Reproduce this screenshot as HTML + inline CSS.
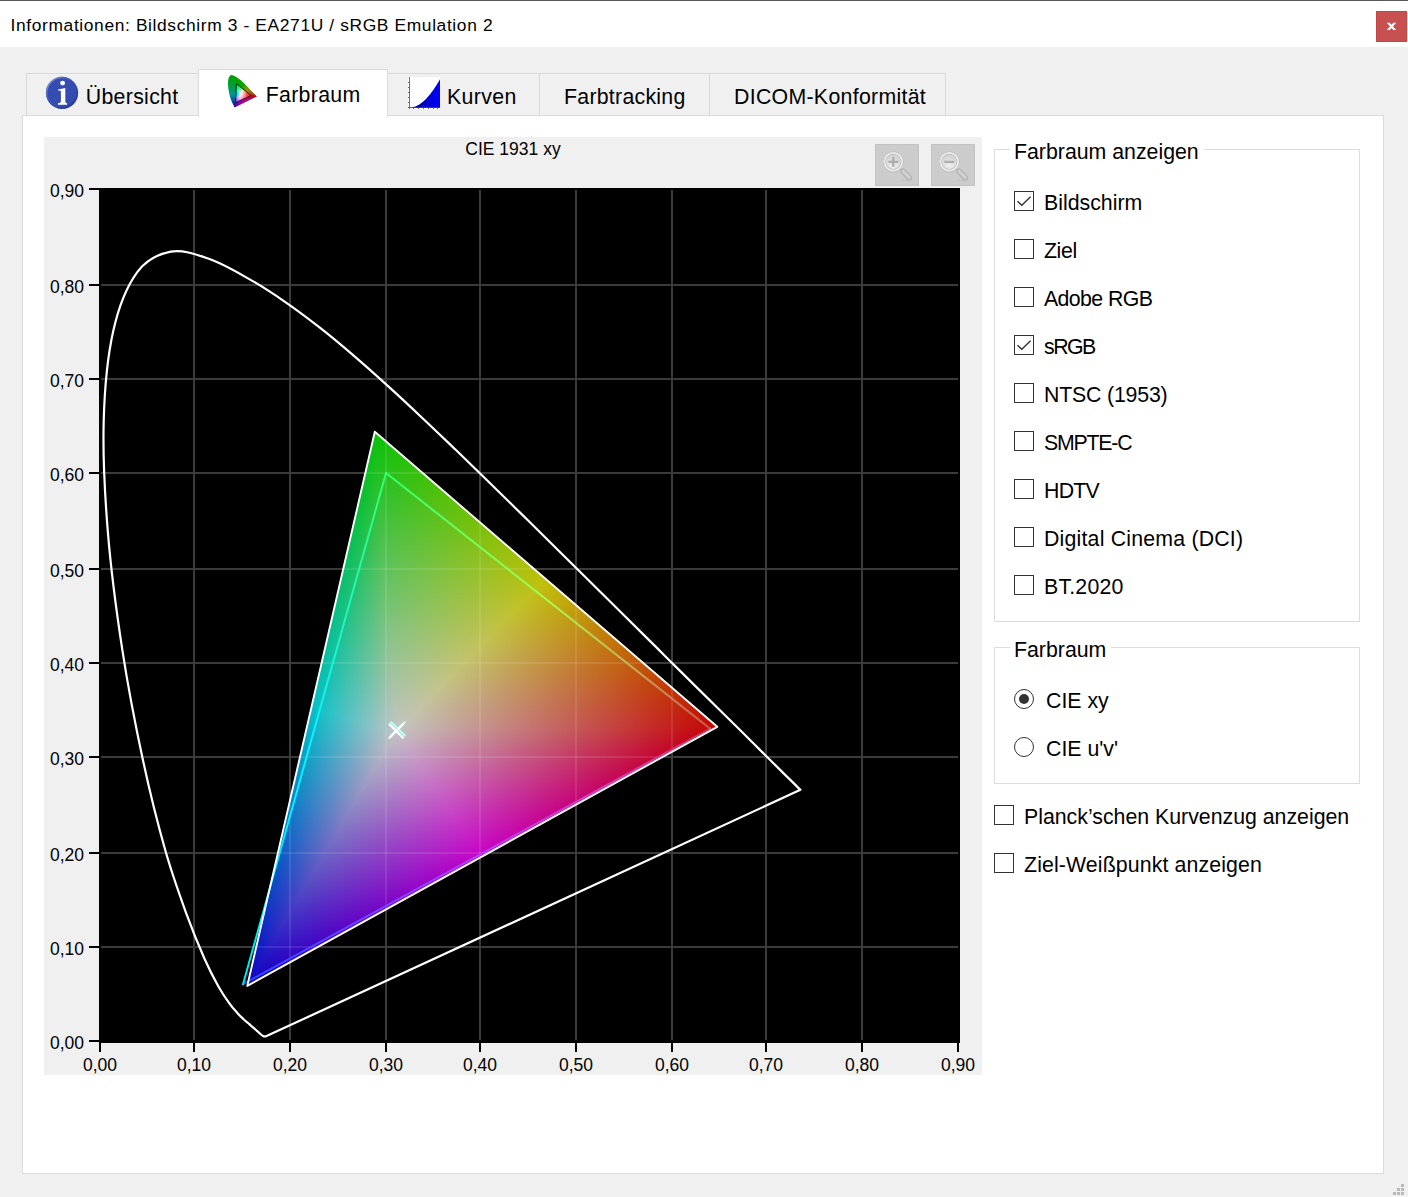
<!DOCTYPE html>
<html lang="de">
<head>
<meta charset="utf-8">
<title>Informationen: Bildschirm 3 - EA271U / sRGB Emulation 2</title>
<style>
html,body{margin:0;padding:0}
body{width:1408px;height:1197px;overflow:hidden;background:#f0f0f0;position:relative;font-family:"Liberation Sans",sans-serif;color:#000}
.abs{position:absolute}
#topline{left:0;top:0;width:1408px;height:1px;background:#5a5a5a}
#titlebar{left:0;top:1px;width:1408px;height:46px;background:#fff}
#title{left:10.6px;top:14px;font-size:17.4px;line-height:22px;white-space:nowrap;color:#000;letter-spacing:0.62px}
#close{left:1376px;top:11px;width:31px;height:31px;background:#c75050;box-sizing:border-box;border:1px solid #c64545}
#pane{left:22px;top:115px;width:1362px;height:1059px;background:#fff;box-sizing:border-box;border:1px solid #dadada}
.tab{box-sizing:border-box;border:1px solid #d9d9d9;border-bottom:none;background:#f0f0f0;top:73px;height:42px}
.tab.sel{background:#fff;top:69px;height:48px;border-color:#dcdcdc}
.tl{font-size:21.3px;line-height:26px;white-space:nowrap}
.gb{box-sizing:border-box;border:1px solid #dcdcdc;background:#fff}
.gl{font-size:21.3px;line-height:26px;white-space:nowrap;background:#fff;padding:0 5px 0 4px}
.cb{width:20px;height:20px;box-sizing:border-box;border:1px solid #333;background:#fff}
.rb{width:20px;height:20px;box-sizing:border-box;border:1px solid #333;border-radius:50%;background:#fff}
.lb{font-size:21.3px;line-height:26px;white-space:nowrap}
.zb{width:44px;height:42px;box-sizing:border-box;background:#cccccc;border:1px solid #c3c3c3}
</style>
</head>
<body>
<div class="abs" id="topline"></div>
<div class="abs" id="titlebar"></div>
<div class="abs" id="title">Informationen: Bildschirm 3 - EA271U / sRGB Emulation 2</div>
<div class="abs" id="close"><svg width="29" height="29" viewBox="0 0 29 29" style="display:block"><path d="M9.8 10.7H12.7L19.2 18.1H16.3Z" fill="#fff"/><path d="M19.2 10.7H16.3L9.8 18.1H12.7Z" fill="#fff"/></svg></div>

<div class="abs" id="pane"></div>

<!-- tabs -->
<div class="abs tab" style="left:26px;width:173px"></div>
<div class="abs tab" style="left:387px;width:153px"></div>
<div class="abs tab" style="left:539px;width:171px"></div>
<div class="abs tab" style="left:709px;width:237px"></div>
<div class="abs tab sel" style="left:198px;width:190px"></div>
<div class="abs tl" style="left:85.8px;top:84px;letter-spacing:0.3px">Übersicht</div>
<div class="abs tl" style="left:265.7px;top:82px;letter-spacing:0.32px">Farbraum</div>
<div class="abs tl" style="left:447px;top:84px;letter-spacing:0.38px">Kurven</div>
<div class="abs tl" style="left:564px;top:84px;letter-spacing:0.27px">Farbtracking</div>
<div class="abs tl" style="left:734px;top:84px;letter-spacing:0.3px">DICOM-Konformität</div>

<svg class="abs" style="left:0;top:60px" width="460" height="60" viewBox="0 60 460 60">
<defs>
<radialGradient id="ig" cx="0.42" cy="0.40" r="0.62"><stop offset="0" stop-color="#354db2"/><stop offset="0.86" stop-color="#344bb0"/><stop offset="1" stop-color="#2a3a98"/></radialGradient>
<linearGradient id="ihl" x1="0" y1="0" x2="1" y2="1"><stop offset="0" stop-color="#a5b1e2"/><stop offset="0.35" stop-color="#5568c0" stop-opacity="0.6"/><stop offset="0.6" stop-color="#344bb0" stop-opacity="0"/><stop offset="1" stop-color="#1c2a86"/></linearGradient>
<linearGradient id="kg" gradientUnits="userSpaceOnUse" x1="412" y1="0" x2="440" y2="0"><stop offset="0" stop-color="#00008c"/><stop offset="0.5" stop-color="#0000cc"/><stop offset="1" stop-color="#0000ff"/></linearGradient>
<clipPath id="hs"><path id="hsp" d="M231.4 75.1C229.3 75.1 228 78.8 228 83.5C228 91 230.5 100.5 234.6 107.2L256.6 96.4C250 90.5 240 77 231.4 75.1Z"/></clipPath>
<linearGradient id="h1" gradientUnits="userSpaceOnUse" x1="0" y1="75" x2="0" y2="107"><stop offset="0" stop-color="#00a000"/><stop offset="0.3" stop-color="#00a030"/><stop offset="0.6" stop-color="#009890"/><stop offset="0.85" stop-color="#0040a8"/><stop offset="1" stop-color="#2000b0"/></linearGradient>
<linearGradient id="h2" gradientUnits="userSpaceOnUse" x1="234" y1="78" x2="256" y2="96"><stop offset="0" stop-color="#00a000"/><stop offset="0.4" stop-color="#10a000"/><stop offset="0.62" stop-color="#909800"/><stop offset="0.8" stop-color="#b85000"/><stop offset="1" stop-color="#cc0000"/></linearGradient>
<linearGradient id="h3" gradientUnits="userSpaceOnUse" x1="234.6" y1="107" x2="256.6" y2="96.4"><stop offset="0" stop-color="#3800b0"/><stop offset="0.2" stop-color="#9000b0"/><stop offset="0.55" stop-color="#c00080"/><stop offset="0.8" stop-color="#c40030"/><stop offset="1" stop-color="#cc0000"/></linearGradient>
<clipPath id="it"><path d="M236.4 83.9L251.2 95.4L235.6 102.8Z"/></clipPath>
<radialGradient id="t1" gradientUnits="userSpaceOnUse" cx="236.6" cy="84.5" r="9"><stop offset="0" stop-color="#00ff50"/><stop offset="0.45" stop-color="#00ff70"/><stop offset="1" stop-color="#00ff70" stop-opacity="0"/></radialGradient>
<radialGradient id="t2" gradientUnits="userSpaceOnUse" cx="251" cy="95.4" r="10"><stop offset="0" stop-color="#ff1010"/><stop offset="0.4" stop-color="#ff4040"/><stop offset="1" stop-color="#ff6060" stop-opacity="0"/></radialGradient>
<radialGradient id="t3" gradientUnits="userSpaceOnUse" cx="235.4" cy="103" r="8.5"><stop offset="0" stop-color="#8030ff"/><stop offset="0.45" stop-color="#c060ff"/><stop offset="1" stop-color="#ff80ff" stop-opacity="0"/></radialGradient>
<radialGradient id="t4" gradientUnits="userSpaceOnUse" cx="235" cy="94" r="5.5"><stop offset="0" stop-color="#00f0ff"/><stop offset="0.5" stop-color="#00f0ff"/><stop offset="1" stop-color="#00f0ff" stop-opacity="0"/></radialGradient>
<radialGradient id="t5" gradientUnits="userSpaceOnUse" cx="244.5" cy="89" r="4.5"><stop offset="0" stop-color="#ffff60"/><stop offset="1" stop-color="#ffff80" stop-opacity="0"/></radialGradient>
<radialGradient id="t6" gradientUnits="userSpaceOnUse" cx="243.5" cy="99.5" r="5"><stop offset="0" stop-color="#ff50c0"/><stop offset="1" stop-color="#ff80e0" stop-opacity="0"/></radialGradient>
</defs>
<!-- info icon -->
<circle cx="62" cy="92.8" r="16.1" fill="url(#ig)"/>
<circle cx="62" cy="92.8" r="15.3" fill="none" stroke="url(#ihl)" stroke-width="1.7"/>
<circle cx="62.6" cy="83.1" r="2.45" fill="#fff"/>
<path d="M58 89.6L65.3 87.9L65.3 101.6Q65.3 103.1 67.1 103.3L67.1 104.8L58 104.8L58 103.3Q60.9 103.2 60.9 101.6L60.9 91.6Q60.9 90.2 58 90.6Z" fill="#fff"/>
<!-- gamut icon -->
<g clip-path="url(#hs)">
<rect x="226" y="72" width="34" height="38" fill="url(#h1)"/>
<path d="M231 72L260 92L258 98L251.2 95.4L236.4 83.9L233 78Z" fill="url(#h2)"/>
<path d="M260 96L251.2 95.4L235.6 102.8L233 110L260 100Z" fill="url(#h3)"/>
</g>
<g clip-path="url(#it)">
<rect x="234" y="82" width="20" height="23" fill="#fff"/>
<rect x="234" y="82" width="20" height="23" fill="url(#t4)"/>
<rect x="234" y="82" width="20" height="23" fill="url(#t5)"/>
<rect x="234" y="82" width="20" height="23" fill="url(#t6)"/>
<rect x="234" y="82" width="20" height="23" fill="url(#t1)"/>
<rect x="234" y="82" width="20" height="23" fill="url(#t2)"/>
<rect x="234" y="82" width="20" height="23" fill="url(#t3)"/>
</g>
<path d="M236.4 83.9L251.2 95.4L235.6 102.8Z" fill="none" stroke="#0a0a0a" stroke-width="1" stroke-opacity="0.9"/>
<!-- curves icon -->
<rect x="408" y="77" width="32" height="32" fill="#fff"/>
<g fill="#6e6e6e" shape-rendering="crispEdges"><rect x="409" y="77" width="1" height="32"/><rect x="408" y="107" width="32" height="1" fill="#6a6a50"/><rect x="408" y="82" width="1" height="1"/><rect x="408" y="87" width="1" height="1"/><rect x="408" y="92" width="1" height="1"/><rect x="408" y="97" width="1" height="1"/><rect x="408" y="102" width="1" height="1"/><rect x="408" y="107" width="1" height="1"/><rect x="409" y="108" width="1" height="1"/><rect x="413" y="108" width="1" height="1"/><rect x="418" y="108" width="1" height="1"/><rect x="423" y="108" width="1" height="1"/><rect x="428" y="108" width="1" height="1"/><rect x="433" y="108" width="1" height="1"/><rect x="437" y="108" width="1" height="1"/></g>
<path d="M410.5 107.5L410.50 107.50L411.48 107.45L412.47 107.31L413.45 107.10L414.43 106.82L415.42 106.47L416.40 106.06L417.38 105.58L418.37 105.05L419.35 104.45L420.33 103.79L421.32 103.08L422.30 102.30L423.28 101.48L424.27 100.59L425.25 99.65L426.23 98.65L427.22 97.60L428.20 96.50L429.18 95.34L430.17 94.13L431.15 92.87L432.13 91.56L433.12 90.19L434.10 88.77L435.08 87.30L436.07 85.78L437.05 84.21L438.03 82.59L439.02 80.92L440.00 79.20L440 107.5Z" fill="url(#kg)"/>

</svg>


<svg id="chart" width="1408" height="1197" viewBox="0 0 1408 1197" style="position:absolute;left:0;top:0">
<defs>
<clipPath id="tc"><path d="M374.8 431.8L717.3 726.8L247.3 985.9Z"/></clipPath>
<linearGradient id="r0" gradientUnits="userSpaceOnUse" x1="374.75" x2="375.03" y1="0" y2="0"><stop offset="-0.0143" stop-color="#08c008"/><stop offset="0.2014" stop-color="#08c008"/><stop offset="0.9921" stop-color="#08c008"/></linearGradient><linearGradient id="r1" gradientUnits="userSpaceOnUse" x1="374.29" x2="377.35" y1="0" y2="0"><stop offset="-0.0012" stop-color="#08c00a"/><stop offset="0.2177" stop-color="#09c009"/><stop offset="0.9986" stop-color="#0bc008"/></linearGradient><linearGradient id="r2" gradientUnits="userSpaceOnUse" x1="373.83" x2="379.68" y1="0" y2="0"><stop offset="-0.0006" stop-color="#08c00b"/><stop offset="0.2168" stop-color="#0bc00b"/><stop offset="1.0006" stop-color="#0dc008"/></linearGradient><linearGradient id="r3" gradientUnits="userSpaceOnUse" x1="373.37" x2="382.00" y1="0" y2="0"><stop offset="-0.0004" stop-color="#08c00c"/><stop offset="0.2176" stop-color="#0cc00c"/><stop offset="1.0002" stop-color="#10c008"/></linearGradient><linearGradient id="r4" gradientUnits="userSpaceOnUse" x1="372.91" x2="384.32" y1="0" y2="0"><stop offset="-0.0003" stop-color="#08c00e"/><stop offset="0.2171" stop-color="#0dc00d"/><stop offset="1.0000" stop-color="#12c008"/></linearGradient><linearGradient id="r5" gradientUnits="userSpaceOnUse" x1="372.45" x2="386.64" y1="0" y2="0"><stop offset="-0.0002" stop-color="#08c00f"/><stop offset="0.2169" stop-color="#0ec00e"/><stop offset="0.9998" stop-color="#15c008"/></linearGradient><linearGradient id="r6" gradientUnits="userSpaceOnUse" x1="371.99" x2="388.96" y1="0" y2="0"><stop offset="-0.0002" stop-color="#08c010"/><stop offset="0.2173" stop-color="#10c010"/><stop offset="0.9997" stop-color="#17c008"/></linearGradient><linearGradient id="r7" gradientUnits="userSpaceOnUse" x1="371.53" x2="391.29" y1="0" y2="0"><stop offset="-0.0001" stop-color="#08c012"/><stop offset="0.2170" stop-color="#11c011"/><stop offset="1.0002" stop-color="#1ac008"/></linearGradient><linearGradient id="r8" gradientUnits="userSpaceOnUse" x1="371.07" x2="393.61" y1="0" y2="0"><stop offset="-0.0001" stop-color="#08c013"/><stop offset="0.2169" stop-color="#12c012"/><stop offset="1.0001" stop-color="#1cc008"/></linearGradient><linearGradient id="r9" gradientUnits="userSpaceOnUse" x1="370.61" x2="395.93" y1="0" y2="0"><stop offset="-0.0001" stop-color="#07c015"/><stop offset="0.2171" stop-color="#13c013"/><stop offset="1.0000" stop-color="#1fc008"/></linearGradient><linearGradient id="r10" gradientUnits="userSpaceOnUse" x1="370.15" x2="398.25" y1="0" y2="0"><stop offset="-0.0001" stop-color="#07c016"/><stop offset="0.2170" stop-color="#15c015"/><stop offset="0.9999" stop-color="#21c008"/></linearGradient><linearGradient id="r11" gradientUnits="userSpaceOnUse" x1="369.69" x2="400.57" y1="0" y2="0"><stop offset="-0.0001" stop-color="#07c017"/><stop offset="0.2172" stop-color="#16c016"/><stop offset="0.9999" stop-color="#24c008"/></linearGradient><linearGradient id="r12" gradientUnits="userSpaceOnUse" x1="369.23" x2="402.90" y1="0" y2="0"><stop offset="-0.0000" stop-color="#07c019"/><stop offset="0.2171" stop-color="#17c017"/><stop offset="1.0001" stop-color="#26c008"/></linearGradient><linearGradient id="r13" gradientUnits="userSpaceOnUse" x1="368.77" x2="405.22" y1="0" y2="0"><stop offset="-0.0000" stop-color="#07c01a"/><stop offset="0.2170" stop-color="#18c018"/><stop offset="1.0000" stop-color="#29c008"/></linearGradient><linearGradient id="r14" gradientUnits="userSpaceOnUse" x1="368.31" x2="407.54" y1="0" y2="0"><stop offset="-0.0000" stop-color="#07c01c"/><stop offset="0.2172" stop-color="#1ac01a"/><stop offset="1.0000" stop-color="#2bc008"/></linearGradient><linearGradient id="r15" gradientUnits="userSpaceOnUse" x1="367.85" x2="409.86" y1="0" y2="0"><stop offset="-0.0000" stop-color="#07c01d"/><stop offset="0.2171" stop-color="#1bc01b"/><stop offset="0.9999" stop-color="#2ec008"/></linearGradient><linearGradient id="r16" gradientUnits="userSpaceOnUse" x1="367.39" x2="412.18" y1="0" y2="0"><stop offset="-0.0000" stop-color="#07c01e"/><stop offset="0.2170" stop-color="#1cc01c"/><stop offset="0.9999" stop-color="#30c008"/></linearGradient><linearGradient id="r17" gradientUnits="userSpaceOnUse" x1="366.93" x2="414.51" y1="0" y2="0"><stop offset="-0.0000" stop-color="#07c020"/><stop offset="0.2171" stop-color="#1dc01d"/><stop offset="1.0001" stop-color="#33c008"/></linearGradient><linearGradient id="r18" gradientUnits="userSpaceOnUse" x1="366.47" x2="416.83" y1="0" y2="0"><stop offset="-0.0000" stop-color="#07c021"/><stop offset="0.2170" stop-color="#1fc01f"/><stop offset="1.0000" stop-color="#35c008"/></linearGradient><linearGradient id="r19" gradientUnits="userSpaceOnUse" x1="366.01" x2="419.15" y1="0" y2="0"><stop offset="-0.0000" stop-color="#07c022"/><stop offset="0.2170" stop-color="#20c120"/><stop offset="1.0000" stop-color="#38c008"/></linearGradient><linearGradient id="r20" gradientUnits="userSpaceOnUse" x1="365.55" x2="421.47" y1="0" y2="0"><stop offset="0.0000" stop-color="#07c024"/><stop offset="0.2171" stop-color="#21c121"/><stop offset="0.9999" stop-color="#3ac008"/></linearGradient><linearGradient id="r21" gradientUnits="userSpaceOnUse" x1="365.09" x2="423.79" y1="0" y2="0"><stop offset="0.0000" stop-color="#07c025"/><stop offset="0.2170" stop-color="#23c123"/><stop offset="0.9999" stop-color="#3dc008"/></linearGradient><linearGradient id="r22" gradientUnits="userSpaceOnUse" x1="364.63" x2="426.12" y1="0" y2="0"><stop offset="0.0000" stop-color="#07c027"/><stop offset="0.2171" stop-color="#24c124"/><stop offset="1.0000" stop-color="#3fc008"/></linearGradient><linearGradient id="r23" gradientUnits="userSpaceOnUse" x1="364.17" x2="428.44" y1="0" y2="0"><stop offset="0.0000" stop-color="#07c028"/><stop offset="0.2171" stop-color="#25c125"/><stop offset="1.0000" stop-color="#42c008"/></linearGradient><linearGradient id="r24" gradientUnits="userSpaceOnUse" x1="363.71" x2="430.76" y1="0" y2="0"><stop offset="0.0000" stop-color="#07c029"/><stop offset="0.2170" stop-color="#26c126"/><stop offset="1.0000" stop-color="#44c008"/></linearGradient><linearGradient id="r25" gradientUnits="userSpaceOnUse" x1="363.25" x2="433.08" y1="0" y2="0"><stop offset="0.0000" stop-color="#07c02b"/><stop offset="0.2171" stop-color="#28c128"/><stop offset="1.0000" stop-color="#47c008"/></linearGradient><linearGradient id="r26" gradientUnits="userSpaceOnUse" x1="362.79" x2="435.41" y1="0" y2="0"><stop offset="0.0000" stop-color="#07c02c"/><stop offset="0.2170" stop-color="#29c129"/><stop offset="1.0001" stop-color="#49c008"/></linearGradient><linearGradient id="r27" gradientUnits="userSpaceOnUse" x1="362.33" x2="437.73" y1="0" y2="0"><stop offset="0.0000" stop-color="#06c02e"/><stop offset="0.2170" stop-color="#2ac12a"/><stop offset="1.0000" stop-color="#4cc008"/></linearGradient><linearGradient id="r28" gradientUnits="userSpaceOnUse" x1="361.87" x2="440.05" y1="0" y2="0"><stop offset="0.0000" stop-color="#06c02f"/><stop offset="0.2171" stop-color="#2bc12b"/><stop offset="1.0000" stop-color="#4ec008"/></linearGradient><linearGradient id="r29" gradientUnits="userSpaceOnUse" x1="361.41" x2="442.37" y1="0" y2="0"><stop offset="0.0000" stop-color="#06c030"/><stop offset="0.2170" stop-color="#2dc12d"/><stop offset="1.0000" stop-color="#51c008"/></linearGradient><linearGradient id="r30" gradientUnits="userSpaceOnUse" x1="360.95" x2="444.69" y1="0" y2="0"><stop offset="0.0000" stop-color="#06c032"/><stop offset="0.2171" stop-color="#2ec12e"/><stop offset="1.0000" stop-color="#53c008"/></linearGradient><linearGradient id="r31" gradientUnits="userSpaceOnUse" x1="360.49" x2="447.02" y1="0" y2="0"><stop offset="0.0000" stop-color="#06c033"/><stop offset="0.2171" stop-color="#2fc12f"/><stop offset="1.0001" stop-color="#56c008"/></linearGradient><linearGradient id="r32" gradientUnits="userSpaceOnUse" x1="360.03" x2="449.34" y1="0" y2="0"><stop offset="0.0000" stop-color="#06c034"/><stop offset="0.2170" stop-color="#30c130"/><stop offset="1.0000" stop-color="#58c008"/></linearGradient><linearGradient id="r33" gradientUnits="userSpaceOnUse" x1="359.57" x2="451.66" y1="0" y2="0"><stop offset="0.0000" stop-color="#06c036"/><stop offset="0.2171" stop-color="#32c132"/><stop offset="1.0000" stop-color="#5bc008"/></linearGradient><linearGradient id="r34" gradientUnits="userSpaceOnUse" x1="359.11" x2="453.98" y1="0" y2="0"><stop offset="0.0000" stop-color="#06c037"/><stop offset="0.2171" stop-color="#33c133"/><stop offset="1.0000" stop-color="#5dc008"/></linearGradient><linearGradient id="r35" gradientUnits="userSpaceOnUse" x1="358.65" x2="456.30" y1="0" y2="0"><stop offset="0.0000" stop-color="#06c039"/><stop offset="0.2170" stop-color="#34c134"/><stop offset="1.0000" stop-color="#60c008"/></linearGradient><linearGradient id="r36" gradientUnits="userSpaceOnUse" x1="358.19" x2="458.63" y1="0" y2="0"><stop offset="0.0000" stop-color="#06c03a"/><stop offset="0.2171" stop-color="#35c135"/><stop offset="1.0000" stop-color="#62c008"/></linearGradient><linearGradient id="r37" gradientUnits="userSpaceOnUse" x1="357.73" x2="460.95" y1="0" y2="0"><stop offset="0.0000" stop-color="#06c03b"/><stop offset="0.2170" stop-color="#37c137"/><stop offset="1.0000" stop-color="#65c008"/></linearGradient><linearGradient id="r38" gradientUnits="userSpaceOnUse" x1="357.27" x2="463.27" y1="0" y2="0"><stop offset="0.0000" stop-color="#06c03d"/><stop offset="0.2171" stop-color="#38c138"/><stop offset="1.0000" stop-color="#67c008"/></linearGradient><linearGradient id="r39" gradientUnits="userSpaceOnUse" x1="356.81" x2="465.59" y1="0" y2="0"><stop offset="0.0000" stop-color="#06c03e"/><stop offset="0.2171" stop-color="#39c139"/><stop offset="1.0000" stop-color="#6ac008"/></linearGradient><linearGradient id="r40" gradientUnits="userSpaceOnUse" x1="356.35" x2="467.91" y1="0" y2="0"><stop offset="0.0000" stop-color="#06c040"/><stop offset="0.2170" stop-color="#3ac13a"/><stop offset="1.0000" stop-color="#6cc008"/></linearGradient><linearGradient id="r41" gradientUnits="userSpaceOnUse" x1="355.89" x2="470.24" y1="0" y2="0"><stop offset="0.0000" stop-color="#06c041"/><stop offset="0.2171" stop-color="#3cc13c"/><stop offset="1.0000" stop-color="#6fc008"/></linearGradient><linearGradient id="r42" gradientUnits="userSpaceOnUse" x1="355.43" x2="472.56" y1="0" y2="0"><stop offset="0.0000" stop-color="#06c042"/><stop offset="0.2171" stop-color="#3dc13d"/><stop offset="1.0000" stop-color="#71c008"/></linearGradient><linearGradient id="r43" gradientUnits="userSpaceOnUse" x1="354.97" x2="474.88" y1="0" y2="0"><stop offset="0.0000" stop-color="#06c044"/><stop offset="0.2170" stop-color="#3ec13e"/><stop offset="1.0000" stop-color="#74c008"/></linearGradient><linearGradient id="r44" gradientUnits="userSpaceOnUse" x1="354.50" x2="477.20" y1="0" y2="0"><stop offset="-0.0000" stop-color="#05c045"/><stop offset="0.2171" stop-color="#3fc13f"/><stop offset="1.0000" stop-color="#76c008"/></linearGradient><linearGradient id="r45" gradientUnits="userSpaceOnUse" x1="354.04" x2="479.52" y1="0" y2="0"><stop offset="-0.0000" stop-color="#05c047"/><stop offset="0.2171" stop-color="#41c141"/><stop offset="1.0000" stop-color="#79c008"/></linearGradient><linearGradient id="r46" gradientUnits="userSpaceOnUse" x1="353.58" x2="481.85" y1="0" y2="0"><stop offset="-0.0000" stop-color="#05c048"/><stop offset="0.2171" stop-color="#42c142"/><stop offset="1.0000" stop-color="#7bc008"/></linearGradient><linearGradient id="r47" gradientUnits="userSpaceOnUse" x1="353.12" x2="484.17" y1="0" y2="0"><stop offset="-0.0000" stop-color="#05c049"/><stop offset="0.2171" stop-color="#43c143"/><stop offset="1.0000" stop-color="#7ec008"/></linearGradient><linearGradient id="r48" gradientUnits="userSpaceOnUse" x1="352.66" x2="486.49" y1="0" y2="0"><stop offset="-0.0000" stop-color="#05c04b"/><stop offset="0.2170" stop-color="#44c144"/><stop offset="1.0000" stop-color="#80c008"/></linearGradient><linearGradient id="r49" gradientUnits="userSpaceOnUse" x1="352.20" x2="488.81" y1="0" y2="0"><stop offset="-0.0000" stop-color="#05c04c"/><stop offset="0.2171" stop-color="#46c146"/><stop offset="1.0000" stop-color="#82c008"/></linearGradient><linearGradient id="r50" gradientUnits="userSpaceOnUse" x1="351.74" x2="491.13" y1="0" y2="0"><stop offset="-0.0000" stop-color="#05c04d"/><stop offset="0.2171" stop-color="#47c147"/><stop offset="1.0000" stop-color="#85c008"/></linearGradient><linearGradient id="r51" gradientUnits="userSpaceOnUse" x1="351.28" x2="493.46" y1="0" y2="0"><stop offset="-0.0000" stop-color="#05c04f"/><stop offset="0.2170" stop-color="#48c148"/><stop offset="1.0000" stop-color="#87c008"/></linearGradient><linearGradient id="r52" gradientUnits="userSpaceOnUse" x1="350.82" x2="495.78" y1="0" y2="0"><stop offset="-0.0000" stop-color="#05c050"/><stop offset="0.2171" stop-color="#49c149"/><stop offset="1.0000" stop-color="#8ac008"/></linearGradient><linearGradient id="r53" gradientUnits="userSpaceOnUse" x1="350.36" x2="498.10" y1="0" y2="0"><stop offset="-0.0000" stop-color="#05c052"/><stop offset="0.2171" stop-color="#4bc14b"/><stop offset="1.0000" stop-color="#8cc008"/></linearGradient><linearGradient id="r54" gradientUnits="userSpaceOnUse" x1="349.90" x2="500.42" y1="0" y2="0"><stop offset="-0.0000" stop-color="#05c053"/><stop offset="0.2171" stop-color="#4cc14c"/><stop offset="1.0000" stop-color="#8fc008"/></linearGradient><linearGradient id="r55" gradientUnits="userSpaceOnUse" x1="349.44" x2="502.74" y1="0" y2="0"><stop offset="-0.0000" stop-color="#05c054"/><stop offset="0.2171" stop-color="#4dc14d"/><stop offset="1.0000" stop-color="#91c008"/></linearGradient><linearGradient id="r56" gradientUnits="userSpaceOnUse" x1="348.98" x2="505.07" y1="0" y2="0"><stop offset="-0.0000" stop-color="#05c056"/><stop offset="0.2170" stop-color="#4ec14f"/><stop offset="1.0000" stop-color="#94c008"/></linearGradient><linearGradient id="r57" gradientUnits="userSpaceOnUse" x1="348.52" x2="507.39" y1="0" y2="0"><stop offset="-0.0000" stop-color="#05c057"/><stop offset="0.2171" stop-color="#50c250"/><stop offset="1.0000" stop-color="#96c008"/></linearGradient><linearGradient id="r58" gradientUnits="userSpaceOnUse" x1="348.06" x2="509.71" y1="0" y2="0"><stop offset="-0.0000" stop-color="#05c059"/><stop offset="0.2171" stop-color="#51c251"/><stop offset="1.0000" stop-color="#99c008"/></linearGradient><linearGradient id="r59" gradientUnits="userSpaceOnUse" x1="347.60" x2="512.03" y1="0" y2="0"><stop offset="-0.0000" stop-color="#05c05a"/><stop offset="0.2170" stop-color="#52c252"/><stop offset="1.0000" stop-color="#9bc008"/></linearGradient><linearGradient id="r60" gradientUnits="userSpaceOnUse" x1="347.14" x2="514.35" y1="0" y2="0"><stop offset="-0.0000" stop-color="#05c05b"/><stop offset="0.2171" stop-color="#54c254"/><stop offset="1.0000" stop-color="#9ec008"/></linearGradient><linearGradient id="r61" gradientUnits="userSpaceOnUse" x1="346.68" x2="516.68" y1="0" y2="0"><stop offset="-0.0000" stop-color="#04c05d"/><stop offset="0.2171" stop-color="#55c255"/><stop offset="1.0000" stop-color="#a0c008"/></linearGradient><linearGradient id="r62" gradientUnits="userSpaceOnUse" x1="346.22" x2="519.00" y1="0" y2="0"><stop offset="-0.0000" stop-color="#04c05e"/><stop offset="0.2170" stop-color="#56c256"/><stop offset="1.0000" stop-color="#a3c008"/></linearGradient><linearGradient id="r63" gradientUnits="userSpaceOnUse" x1="345.76" x2="521.32" y1="0" y2="0"><stop offset="-0.0000" stop-color="#04c05f"/><stop offset="0.2171" stop-color="#57c257"/><stop offset="1.0000" stop-color="#a5c008"/></linearGradient><linearGradient id="r64" gradientUnits="userSpaceOnUse" x1="345.30" x2="523.64" y1="0" y2="0"><stop offset="-0.0000" stop-color="#04c061"/><stop offset="0.2171" stop-color="#59c259"/><stop offset="1.0000" stop-color="#a8c008"/></linearGradient><linearGradient id="r65" gradientUnits="userSpaceOnUse" x1="344.84" x2="525.96" y1="0" y2="0"><stop offset="-0.0000" stop-color="#04c062"/><stop offset="0.2171" stop-color="#5ac25a"/><stop offset="1.0000" stop-color="#aac008"/></linearGradient><linearGradient id="r66" gradientUnits="userSpaceOnUse" x1="344.38" x2="528.29" y1="0" y2="0"><stop offset="-0.0000" stop-color="#04c064"/><stop offset="0.2171" stop-color="#5bc25b"/><stop offset="1.0000" stop-color="#adc008"/></linearGradient><linearGradient id="r67" gradientUnits="userSpaceOnUse" x1="343.92" x2="530.61" y1="0" y2="0"><stop offset="-0.0000" stop-color="#04c065"/><stop offset="0.2170" stop-color="#5cc25c"/><stop offset="1.0000" stop-color="#afc008"/></linearGradient><linearGradient id="r68" gradientUnits="userSpaceOnUse" x1="343.46" x2="532.93" y1="0" y2="0"><stop offset="0.0000" stop-color="#04c066"/><stop offset="0.2171" stop-color="#5ec25e"/><stop offset="1.0000" stop-color="#b2c008"/></linearGradient><linearGradient id="r69" gradientUnits="userSpaceOnUse" x1="343.00" x2="535.25" y1="0" y2="0"><stop offset="0.0000" stop-color="#04c068"/><stop offset="0.2171" stop-color="#5fc25f"/><stop offset="1.0000" stop-color="#b4c008"/></linearGradient><linearGradient id="r70" gradientUnits="userSpaceOnUse" x1="342.54" x2="537.57" y1="0" y2="0"><stop offset="0.0000" stop-color="#04c069"/><stop offset="0.2170" stop-color="#60c260"/><stop offset="1.0000" stop-color="#b7c008"/></linearGradient><linearGradient id="r71" gradientUnits="userSpaceOnUse" x1="342.08" x2="539.90" y1="0" y2="0"><stop offset="0.0000" stop-color="#04c06b"/><stop offset="0.2171" stop-color="#61c261"/><stop offset="1.0000" stop-color="#b9c008"/></linearGradient><linearGradient id="r72" gradientUnits="userSpaceOnUse" x1="341.62" x2="542.22" y1="0" y2="0"><stop offset="0.0000" stop-color="#04c06c"/><stop offset="0.2171" stop-color="#63c263"/><stop offset="1.0000" stop-color="#bcc008"/></linearGradient><linearGradient id="r73" gradientUnits="userSpaceOnUse" x1="341.16" x2="544.54" y1="0" y2="0"><stop offset="0.0000" stop-color="#04c06d"/><stop offset="0.2171" stop-color="#64c264"/><stop offset="1.0000" stop-color="#bec008"/></linearGradient><linearGradient id="r74" gradientUnits="userSpaceOnUse" x1="340.70" x2="546.86" y1="0" y2="0"><stop offset="0.0000" stop-color="#04c06f"/><stop offset="0.2171" stop-color="#65c265"/><stop offset="0.9927" stop-color="#c0c009"/><stop offset="1.0000" stop-color="#c0bf08"/></linearGradient><linearGradient id="r75" gradientUnits="userSpaceOnUse" x1="340.24" x2="549.18" y1="0" y2="0"><stop offset="0.0000" stop-color="#04c070"/><stop offset="0.2170" stop-color="#66c266"/><stop offset="0.9722" stop-color="#c0c00b"/><stop offset="1.0000" stop-color="#c0bd08"/></linearGradient><linearGradient id="r76" gradientUnits="userSpaceOnUse" x1="339.78" x2="551.51" y1="0" y2="0"><stop offset="0.0000" stop-color="#04c071"/><stop offset="0.2171" stop-color="#68c268"/><stop offset="0.9523" stop-color="#c0c00e"/><stop offset="1.0000" stop-color="#c0ba08"/></linearGradient><linearGradient id="r77" gradientUnits="userSpaceOnUse" x1="339.32" x2="553.83" y1="0" y2="0"><stop offset="0.0000" stop-color="#04c073"/><stop offset="0.2171" stop-color="#69c269"/><stop offset="0.9329" stop-color="#c0c010"/><stop offset="1.0000" stop-color="#c0b708"/></linearGradient><linearGradient id="r78" gradientUnits="userSpaceOnUse" x1="338.86" x2="556.15" y1="0" y2="0"><stop offset="0.0000" stop-color="#04c074"/><stop offset="0.2170" stop-color="#6ac26a"/><stop offset="0.9140" stop-color="#c0c013"/><stop offset="1.0000" stop-color="#c0b508"/></linearGradient><linearGradient id="r79" gradientUnits="userSpaceOnUse" x1="338.40" x2="558.47" y1="0" y2="0"><stop offset="0.0000" stop-color="#03c076"/><stop offset="0.2171" stop-color="#6bc26b"/><stop offset="0.8956" stop-color="#c0c015"/><stop offset="1.0000" stop-color="#c0b208"/></linearGradient><linearGradient id="r80" gradientUnits="userSpaceOnUse" x1="337.94" x2="560.79" y1="0" y2="0"><stop offset="0.0000" stop-color="#03c077"/><stop offset="0.2171" stop-color="#6dc26d"/><stop offset="0.8776" stop-color="#c0c018"/><stop offset="1.0000" stop-color="#c0b008"/></linearGradient><linearGradient id="r81" gradientUnits="userSpaceOnUse" x1="337.48" x2="563.12" y1="0" y2="0"><stop offset="0.0000" stop-color="#03c078"/><stop offset="0.2171" stop-color="#6ec26e"/><stop offset="0.8601" stop-color="#c0c01a"/><stop offset="1.0000" stop-color="#c0ad08"/></linearGradient><linearGradient id="r82" gradientUnits="userSpaceOnUse" x1="337.02" x2="565.44" y1="0" y2="0"><stop offset="0.0000" stop-color="#03c07a"/><stop offset="0.2171" stop-color="#6fc26f"/><stop offset="0.8429" stop-color="#c0c01d"/><stop offset="1.0000" stop-color="#c0ab08"/></linearGradient><linearGradient id="r83" gradientUnits="userSpaceOnUse" x1="336.56" x2="567.76" y1="0" y2="0"><stop offset="0.0000" stop-color="#03c07b"/><stop offset="0.2171" stop-color="#70c270"/><stop offset="0.8263" stop-color="#c0c01f"/><stop offset="1.0000" stop-color="#c1a807"/></linearGradient><linearGradient id="r84" gradientUnits="userSpaceOnUse" x1="336.10" x2="570.08" y1="0" y2="0"><stop offset="0.0000" stop-color="#03c07d"/><stop offset="0.2171" stop-color="#72c272"/><stop offset="0.8100" stop-color="#c1c122"/><stop offset="1.0000" stop-color="#c1a607"/></linearGradient><linearGradient id="r85" gradientUnits="userSpaceOnUse" x1="335.64" x2="572.41" y1="0" y2="0"><stop offset="0.0000" stop-color="#03c07e"/><stop offset="0.2171" stop-color="#73c273"/><stop offset="0.7940" stop-color="#c1c124"/><stop offset="1.0000" stop-color="#c1a307"/></linearGradient><linearGradient id="r86" gradientUnits="userSpaceOnUse" x1="335.18" x2="574.73" y1="0" y2="0"><stop offset="0.0000" stop-color="#03c07f"/><stop offset="0.2170" stop-color="#74c274"/><stop offset="0.7785" stop-color="#c1c127"/><stop offset="1.0000" stop-color="#c1a107"/></linearGradient><linearGradient id="r87" gradientUnits="userSpaceOnUse" x1="334.72" x2="577.05" y1="0" y2="0"><stop offset="0.0000" stop-color="#03c081"/><stop offset="0.2171" stop-color="#75c275"/><stop offset="0.7633" stop-color="#c1c129"/><stop offset="1.0000" stop-color="#c19e07"/></linearGradient><linearGradient id="r88" gradientUnits="userSpaceOnUse" x1="334.26" x2="579.37" y1="0" y2="0"><stop offset="0.0000" stop-color="#03c082"/><stop offset="0.2171" stop-color="#77c277"/><stop offset="0.7485" stop-color="#c1c12c"/><stop offset="1.0000" stop-color="#c19b07"/></linearGradient><linearGradient id="r89" gradientUnits="userSpaceOnUse" x1="333.80" x2="581.69" y1="0" y2="0"><stop offset="0.0000" stop-color="#03c083"/><stop offset="0.2171" stop-color="#78c278"/><stop offset="0.7339" stop-color="#c1c12e"/><stop offset="1.0000" stop-color="#c19907"/></linearGradient><linearGradient id="r90" gradientUnits="userSpaceOnUse" x1="333.34" x2="584.02" y1="0" y2="0"><stop offset="0.0000" stop-color="#03c085"/><stop offset="0.2171" stop-color="#79c279"/><stop offset="0.7198" stop-color="#c1c131"/><stop offset="1.0000" stop-color="#c19607"/></linearGradient><linearGradient id="r91" gradientUnits="userSpaceOnUse" x1="332.88" x2="586.34" y1="0" y2="0"><stop offset="0.0000" stop-color="#03c086"/><stop offset="0.2171" stop-color="#7ac27a"/><stop offset="0.7059" stop-color="#c1c133"/><stop offset="1.0000" stop-color="#c19407"/></linearGradient><linearGradient id="r92" gradientUnits="userSpaceOnUse" x1="332.42" x2="588.66" y1="0" y2="0"><stop offset="0.0000" stop-color="#03c088"/><stop offset="0.2171" stop-color="#7cc27c"/><stop offset="0.6923" stop-color="#c1c135"/><stop offset="1.0000" stop-color="#c19107"/></linearGradient><linearGradient id="r93" gradientUnits="userSpaceOnUse" x1="331.95" x2="590.98" y1="0" y2="0"><stop offset="-0.0000" stop-color="#03c089"/><stop offset="0.2171" stop-color="#7dc27d"/><stop offset="0.6791" stop-color="#c1c138"/><stop offset="1.0000" stop-color="#c18f07"/></linearGradient><linearGradient id="r94" gradientUnits="userSpaceOnUse" x1="331.49" x2="593.30" y1="0" y2="0"><stop offset="-0.0000" stop-color="#03c08a"/><stop offset="0.2170" stop-color="#7ec37e"/><stop offset="0.6660" stop-color="#c1c13a"/><stop offset="1.0000" stop-color="#c18c07"/></linearGradient><linearGradient id="r95" gradientUnits="userSpaceOnUse" x1="331.03" x2="595.63" y1="0" y2="0"><stop offset="-0.0000" stop-color="#03c08c"/><stop offset="0.2171" stop-color="#80c380"/><stop offset="0.6533" stop-color="#c1c13d"/><stop offset="1.0000" stop-color="#c18a07"/></linearGradient><linearGradient id="r96" gradientUnits="userSpaceOnUse" x1="330.57" x2="597.95" y1="0" y2="0"><stop offset="-0.0000" stop-color="#02c08d"/><stop offset="0.2171" stop-color="#81c381"/><stop offset="0.6408" stop-color="#c1c13f"/><stop offset="1.0000" stop-color="#c18707"/></linearGradient><linearGradient id="r97" gradientUnits="userSpaceOnUse" x1="330.11" x2="600.27" y1="0" y2="0"><stop offset="-0.0000" stop-color="#02c08f"/><stop offset="0.2170" stop-color="#82c382"/><stop offset="0.6287" stop-color="#c1c142"/><stop offset="1.0000" stop-color="#c18407"/></linearGradient><linearGradient id="r98" gradientUnits="userSpaceOnUse" x1="329.65" x2="602.59" y1="0" y2="0"><stop offset="-0.0000" stop-color="#02c090"/><stop offset="0.2171" stop-color="#83c383"/><stop offset="0.6167" stop-color="#c1c144"/><stop offset="1.0000" stop-color="#c18207"/></linearGradient><linearGradient id="r99" gradientUnits="userSpaceOnUse" x1="329.19" x2="604.91" y1="0" y2="0"><stop offset="-0.0000" stop-color="#02c091"/><stop offset="0.2171" stop-color="#85c385"/><stop offset="0.6050" stop-color="#c1c147"/><stop offset="1.0000" stop-color="#c17f07"/></linearGradient><linearGradient id="r100" gradientUnits="userSpaceOnUse" x1="328.73" x2="607.24" y1="0" y2="0"><stop offset="-0.0000" stop-color="#02c093"/><stop offset="0.2171" stop-color="#86c386"/><stop offset="0.5935" stop-color="#c1c149"/><stop offset="1.0000" stop-color="#c17d07"/></linearGradient><linearGradient id="r101" gradientUnits="userSpaceOnUse" x1="328.27" x2="609.56" y1="0" y2="0"><stop offset="-0.0000" stop-color="#02c094"/><stop offset="0.2171" stop-color="#87c387"/><stop offset="0.5822" stop-color="#c1c14c"/><stop offset="1.0000" stop-color="#c17a07"/></linearGradient><linearGradient id="r102" gradientUnits="userSpaceOnUse" x1="327.81" x2="611.88" y1="0" y2="0"><stop offset="-0.0000" stop-color="#02c096"/><stop offset="0.2171" stop-color="#88c388"/><stop offset="0.5712" stop-color="#c1c14e"/><stop offset="1.0000" stop-color="#c27806"/></linearGradient><linearGradient id="r103" gradientUnits="userSpaceOnUse" x1="327.35" x2="614.20" y1="0" y2="0"><stop offset="-0.0000" stop-color="#02c097"/><stop offset="0.2171" stop-color="#8ac38a"/><stop offset="0.5604" stop-color="#c2c251"/><stop offset="1.0000" stop-color="#c27506"/></linearGradient><linearGradient id="r104" gradientUnits="userSpaceOnUse" x1="326.89" x2="616.52" y1="0" y2="0"><stop offset="-0.0000" stop-color="#02c098"/><stop offset="0.2171" stop-color="#8bc38b"/><stop offset="0.5498" stop-color="#c2c253"/><stop offset="1.0000" stop-color="#c27306"/></linearGradient><linearGradient id="r105" gradientUnits="userSpaceOnUse" x1="326.43" x2="618.85" y1="0" y2="0"><stop offset="-0.0000" stop-color="#02c09a"/><stop offset="0.2170" stop-color="#8cc38c"/><stop offset="0.5394" stop-color="#c2c256"/><stop offset="1.0000" stop-color="#c27006"/></linearGradient><linearGradient id="r106" gradientUnits="userSpaceOnUse" x1="325.97" x2="621.17" y1="0" y2="0"><stop offset="-0.0000" stop-color="#02c09b"/><stop offset="0.2171" stop-color="#8dc38d"/><stop offset="0.5292" stop-color="#c2c258"/><stop offset="1.0000" stop-color="#c26e06"/></linearGradient><linearGradient id="r107" gradientUnits="userSpaceOnUse" x1="325.51" x2="623.49" y1="0" y2="0"><stop offset="-0.0000" stop-color="#02c09c"/><stop offset="0.2171" stop-color="#8fc38f"/><stop offset="0.5192" stop-color="#c2c25b"/><stop offset="1.0000" stop-color="#c26b06"/></linearGradient><linearGradient id="r108" gradientUnits="userSpaceOnUse" x1="325.05" x2="625.81" y1="0" y2="0"><stop offset="-0.0000" stop-color="#02c09e"/><stop offset="0.2171" stop-color="#90c390"/><stop offset="0.5093" stop-color="#c2c25d"/><stop offset="1.0000" stop-color="#c26806"/></linearGradient><linearGradient id="r109" gradientUnits="userSpaceOnUse" x1="324.59" x2="628.13" y1="0" y2="0"><stop offset="-0.0000" stop-color="#02c09f"/><stop offset="0.2171" stop-color="#91c391"/><stop offset="0.4997" stop-color="#c2c260"/><stop offset="1.0000" stop-color="#c26606"/></linearGradient><linearGradient id="r110" gradientUnits="userSpaceOnUse" x1="324.13" x2="630.46" y1="0" y2="0"><stop offset="-0.0000" stop-color="#02c0a1"/><stop offset="0.2171" stop-color="#92c392"/><stop offset="0.4902" stop-color="#c2c262"/><stop offset="1.0000" stop-color="#c26306"/></linearGradient><linearGradient id="r111" gradientUnits="userSpaceOnUse" x1="323.67" x2="632.78" y1="0" y2="0"><stop offset="-0.0000" stop-color="#02c0a2"/><stop offset="0.2171" stop-color="#94c394"/><stop offset="0.4809" stop-color="#c2c265"/><stop offset="1.0000" stop-color="#c26106"/></linearGradient><linearGradient id="r112" gradientUnits="userSpaceOnUse" x1="323.21" x2="635.10" y1="0" y2="0"><stop offset="-0.0000" stop-color="#02c0a3"/><stop offset="0.2171" stop-color="#95c395"/><stop offset="0.4717" stop-color="#c2c267"/><stop offset="1.0000" stop-color="#c25e06"/></linearGradient><linearGradient id="r113" gradientUnits="userSpaceOnUse" x1="322.75" x2="637.42" y1="0" y2="0"><stop offset="-0.0000" stop-color="#01c0a5"/><stop offset="0.2170" stop-color="#96c396"/><stop offset="0.4627" stop-color="#c2c26a"/><stop offset="1.0000" stop-color="#c25c06"/></linearGradient><linearGradient id="r114" gradientUnits="userSpaceOnUse" x1="322.29" x2="639.74" y1="0" y2="0"><stop offset="-0.0000" stop-color="#01c0a6"/><stop offset="0.2171" stop-color="#97c397"/><stop offset="0.4539" stop-color="#c2c26c"/><stop offset="1.0000" stop-color="#c25906"/></linearGradient><linearGradient id="r115" gradientUnits="userSpaceOnUse" x1="321.83" x2="642.07" y1="0" y2="0"><stop offset="-0.0000" stop-color="#01c0a8"/><stop offset="0.2171" stop-color="#99c399"/><stop offset="0.4452" stop-color="#c2c26e"/><stop offset="1.0000" stop-color="#c25706"/></linearGradient><linearGradient id="r116" gradientUnits="userSpaceOnUse" x1="321.37" x2="644.39" y1="0" y2="0"><stop offset="-0.0000" stop-color="#01c0a9"/><stop offset="0.2171" stop-color="#9ac39a"/><stop offset="0.4367" stop-color="#c2c271"/><stop offset="1.0000" stop-color="#c25406"/></linearGradient><linearGradient id="r117" gradientUnits="userSpaceOnUse" x1="320.91" x2="646.71" y1="0" y2="0"><stop offset="0.0000" stop-color="#01c0aa"/><stop offset="0.2171" stop-color="#9bc39b"/><stop offset="0.4283" stop-color="#c2c273"/><stop offset="1.0000" stop-color="#c25206"/></linearGradient><linearGradient id="r118" gradientUnits="userSpaceOnUse" x1="320.45" x2="649.03" y1="0" y2="0"><stop offset="0.0000" stop-color="#01c0ac"/><stop offset="0.2171" stop-color="#9cc39c"/><stop offset="0.4201" stop-color="#c2c276"/><stop offset="1.0000" stop-color="#c24f06"/></linearGradient><linearGradient id="r119" gradientUnits="userSpaceOnUse" x1="319.99" x2="651.35" y1="0" y2="0"><stop offset="0.0000" stop-color="#01c0ad"/><stop offset="0.2171" stop-color="#9ec39e"/><stop offset="0.4120" stop-color="#c2c278"/><stop offset="1.0000" stop-color="#c24c06"/></linearGradient><linearGradient id="r120" gradientUnits="userSpaceOnUse" x1="319.53" x2="653.68" y1="0" y2="0"><stop offset="0.0000" stop-color="#01c0ae"/><stop offset="0.2171" stop-color="#9fc39f"/><stop offset="0.4040" stop-color="#c2c27b"/><stop offset="1.0000" stop-color="#c34a05"/></linearGradient><linearGradient id="r121" gradientUnits="userSpaceOnUse" x1="319.07" x2="656.00" y1="0" y2="0"><stop offset="0.0000" stop-color="#01c0b0"/><stop offset="0.2171" stop-color="#a0c3a0"/><stop offset="0.3962" stop-color="#c2c27d"/><stop offset="1.0000" stop-color="#c34705"/></linearGradient><linearGradient id="r122" gradientUnits="userSpaceOnUse" x1="318.61" x2="658.32" y1="0" y2="0"><stop offset="0.0000" stop-color="#01c0b1"/><stop offset="0.2171" stop-color="#a1c3a1"/><stop offset="0.3885" stop-color="#c3c380"/><stop offset="1.0000" stop-color="#c34505"/></linearGradient><linearGradient id="r123" gradientUnits="userSpaceOnUse" x1="318.15" x2="660.64" y1="0" y2="0"><stop offset="0.0000" stop-color="#01c0b3"/><stop offset="0.2171" stop-color="#a3c3a3"/><stop offset="0.3809" stop-color="#c3c382"/><stop offset="1.0000" stop-color="#c34205"/></linearGradient><linearGradient id="r124" gradientUnits="userSpaceOnUse" x1="317.69" x2="662.96" y1="0" y2="0"><stop offset="0.0000" stop-color="#01c0b4"/><stop offset="0.2171" stop-color="#a4c3a4"/><stop offset="0.3735" stop-color="#c3c385"/><stop offset="1.0000" stop-color="#c34005"/></linearGradient><linearGradient id="r125" gradientUnits="userSpaceOnUse" x1="317.23" x2="665.29" y1="0" y2="0"><stop offset="0.0000" stop-color="#01c0b5"/><stop offset="0.2171" stop-color="#a5c3a5"/><stop offset="0.3662" stop-color="#c3c387"/><stop offset="1.0000" stop-color="#c33d05"/></linearGradient><linearGradient id="r126" gradientUnits="userSpaceOnUse" x1="316.77" x2="667.61" y1="0" y2="0"><stop offset="0.0000" stop-color="#01c0b7"/><stop offset="0.2171" stop-color="#a6c3a6"/><stop offset="0.3589" stop-color="#c3c38a"/><stop offset="1.0000" stop-color="#c33b05"/></linearGradient><linearGradient id="r127" gradientUnits="userSpaceOnUse" x1="316.31" x2="669.93" y1="0" y2="0"><stop offset="0.0000" stop-color="#01c0b8"/><stop offset="0.2171" stop-color="#a8c3a8"/><stop offset="0.3518" stop-color="#c3c38c"/><stop offset="1.0000" stop-color="#c33805"/></linearGradient><linearGradient id="r128" gradientUnits="userSpaceOnUse" x1="315.85" x2="672.25" y1="0" y2="0"><stop offset="0.0000" stop-color="#01c0ba"/><stop offset="0.2171" stop-color="#a9c3a9"/><stop offset="0.3448" stop-color="#c3c38f"/><stop offset="1.0000" stop-color="#c33505"/></linearGradient><linearGradient id="r129" gradientUnits="userSpaceOnUse" x1="315.39" x2="674.57" y1="0" y2="0"><stop offset="0.0000" stop-color="#01c0bb"/><stop offset="0.2171" stop-color="#aac3aa"/><stop offset="0.3379" stop-color="#c3c391"/><stop offset="1.0000" stop-color="#c33305"/></linearGradient><linearGradient id="r130" gradientUnits="userSpaceOnUse" x1="314.93" x2="676.90" y1="0" y2="0"><stop offset="0.0000" stop-color="#01c0bc"/><stop offset="0.2171" stop-color="#abc3ab"/><stop offset="0.3312" stop-color="#c3c394"/><stop offset="1.0000" stop-color="#c33005"/></linearGradient><linearGradient id="r131" gradientUnits="userSpaceOnUse" x1="314.47" x2="679.22" y1="0" y2="0"><stop offset="0.0000" stop-color="#00c0be"/><stop offset="0.2171" stop-color="#adc4ad"/><stop offset="0.3245" stop-color="#c3c396"/><stop offset="1.0000" stop-color="#c32e05"/></linearGradient><linearGradient id="r132" gradientUnits="userSpaceOnUse" x1="314.01" x2="681.54" y1="0" y2="0"><stop offset="0.0000" stop-color="#00c0bf"/><stop offset="0.2170" stop-color="#aec4ae"/><stop offset="0.3179" stop-color="#c3c399"/><stop offset="1.0000" stop-color="#c32b05"/></linearGradient><linearGradient id="r133" gradientUnits="userSpaceOnUse" x1="313.55" x2="683.86" y1="0" y2="0"><stop offset="0.0000" stop-color="#00c0c0"/><stop offset="0.2171" stop-color="#afc4af"/><stop offset="0.3114" stop-color="#c3c39b"/><stop offset="1.0000" stop-color="#c32905"/></linearGradient><linearGradient id="r134" gradientUnits="userSpaceOnUse" x1="313.09" x2="686.18" y1="0" y2="0"><stop offset="0.0000" stop-color="#00c0c2"/><stop offset="0.2171" stop-color="#b1c4b1"/><stop offset="0.3050" stop-color="#c3c39e"/><stop offset="1.0000" stop-color="#c32605"/></linearGradient><linearGradient id="r135" gradientUnits="userSpaceOnUse" x1="312.63" x2="688.51" y1="0" y2="0"><stop offset="0.0000" stop-color="#00c0c3"/><stop offset="0.2171" stop-color="#b2c4b2"/><stop offset="0.2988" stop-color="#c3c3a0"/><stop offset="1.0000" stop-color="#c32405"/></linearGradient><linearGradient id="r136" gradientUnits="userSpaceOnUse" x1="312.17" x2="690.83" y1="0" y2="0"><stop offset="0.0000" stop-color="#00c0c5"/><stop offset="0.2171" stop-color="#b3c4b3"/><stop offset="0.2926" stop-color="#c3c3a3"/><stop offset="1.0000" stop-color="#c32105"/></linearGradient><linearGradient id="r137" gradientUnits="userSpaceOnUse" x1="311.71" x2="693.15" y1="0" y2="0"><stop offset="0.0000" stop-color="#00c0c6"/><stop offset="0.2171" stop-color="#b4c4b4"/><stop offset="0.2865" stop-color="#c3c3a5"/><stop offset="1.0000" stop-color="#c31f05"/></linearGradient><linearGradient id="r138" gradientUnits="userSpaceOnUse" x1="311.25" x2="695.47" y1="0" y2="0"><stop offset="0.0000" stop-color="#00c0c7"/><stop offset="0.2171" stop-color="#b6c4b6"/><stop offset="0.2804" stop-color="#c3c3a7"/><stop offset="1.0000" stop-color="#c31c05"/></linearGradient><linearGradient id="r139" gradientUnits="userSpaceOnUse" x1="310.79" x2="697.79" y1="0" y2="0"><stop offset="0.0000" stop-color="#00bfc8"/><stop offset="0.0121" stop-color="#0ac0c8"/><stop offset="0.2171" stop-color="#b7c4b7"/><stop offset="0.2745" stop-color="#c3c3aa"/><stop offset="1.0000" stop-color="#c41904"/></linearGradient><linearGradient id="r140" gradientUnits="userSpaceOnUse" x1="310.33" x2="700.12" y1="0" y2="0"><stop offset="0.0000" stop-color="#00bec8"/><stop offset="0.0330" stop-color="#1cc1c7"/><stop offset="0.2171" stop-color="#b8c4b8"/><stop offset="0.2687" stop-color="#c3c3ac"/><stop offset="1.0000" stop-color="#c41704"/></linearGradient><linearGradient id="r141" gradientUnits="userSpaceOnUse" x1="309.86" x2="702.44" y1="0" y2="0"><stop offset="-0.0000" stop-color="#00bcc8"/><stop offset="0.0535" stop-color="#2ec1c7"/><stop offset="0.2171" stop-color="#b9c4b9"/><stop offset="0.2629" stop-color="#c4c4af"/><stop offset="1.0000" stop-color="#c41404"/></linearGradient><linearGradient id="r142" gradientUnits="userSpaceOnUse" x1="309.40" x2="704.76" y1="0" y2="0"><stop offset="-0.0000" stop-color="#00bbc8"/><stop offset="0.0738" stop-color="#3fc1c7"/><stop offset="0.2171" stop-color="#bbc4bb"/><stop offset="0.2572" stop-color="#c4c4b1"/><stop offset="1.0000" stop-color="#c41204"/></linearGradient><linearGradient id="r143" gradientUnits="userSpaceOnUse" x1="308.94" x2="707.08" y1="0" y2="0"><stop offset="-0.0000" stop-color="#00bac8"/><stop offset="0.0937" stop-color="#51c2c6"/><stop offset="0.2171" stop-color="#bcc4bc"/><stop offset="0.2516" stop-color="#c4c4b4"/><stop offset="1.0000" stop-color="#c40f04"/></linearGradient><linearGradient id="r144" gradientUnits="userSpaceOnUse" x1="308.48" x2="709.41" y1="0" y2="0"><stop offset="-0.0000" stop-color="#01b8c8"/><stop offset="0.1134" stop-color="#63c2c6"/><stop offset="0.2171" stop-color="#bdc4bd"/><stop offset="0.2461" stop-color="#c4c4b6"/><stop offset="1.0000" stop-color="#c40d04"/></linearGradient><linearGradient id="r145" gradientUnits="userSpaceOnUse" x1="308.02" x2="711.73" y1="0" y2="0"><stop offset="-0.0000" stop-color="#01b7c8"/><stop offset="0.1329" stop-color="#74c2c6"/><stop offset="0.2171" stop-color="#bec4be"/><stop offset="0.2407" stop-color="#c4c4b9"/><stop offset="1.0000" stop-color="#c40a04"/></linearGradient><linearGradient id="r146" gradientUnits="userSpaceOnUse" x1="307.56" x2="714.05" y1="0" y2="0"><stop offset="-0.0000" stop-color="#01b6c8"/><stop offset="0.1520" stop-color="#86c3c5"/><stop offset="0.2171" stop-color="#c0c4c0"/><stop offset="0.2353" stop-color="#c4c4bb"/><stop offset="1.0000" stop-color="#c40804"/></linearGradient><linearGradient id="r147" gradientUnits="userSpaceOnUse" x1="307.10" x2="716.37" y1="0" y2="0"><stop offset="-0.0000" stop-color="#01b4c8"/><stop offset="0.1709" stop-color="#98c3c5"/><stop offset="0.2171" stop-color="#c1c4c1"/><stop offset="0.2300" stop-color="#c4c4be"/><stop offset="1.0000" stop-color="#c40504"/></linearGradient><linearGradient id="r148" gradientUnits="userSpaceOnUse" x1="306.64" x2="715.12" y1="0" y2="0"><stop offset="-0.0000" stop-color="#01b3c8"/><stop offset="0.1912" stop-color="#a9c3c5"/><stop offset="0.2189" stop-color="#c2c4c2"/><stop offset="0.2267" stop-color="#c4c4c0"/><stop offset="0.7808" stop-color="#c43b3b"/><stop offset="1.0000" stop-color="#c40406"/></linearGradient><linearGradient id="r149" gradientUnits="userSpaceOnUse" x1="306.18" x2="711.50" y1="0" y2="0"><stop offset="-0.0000" stop-color="#01b1c8"/><stop offset="0.2128" stop-color="#bbc4c4"/><stop offset="0.2222" stop-color="#c3c4c3"/><stop offset="0.2248" stop-color="#c4c4c3"/><stop offset="0.4109" stop-color="#c49696"/><stop offset="1.0000" stop-color="#c40409"/></linearGradient><linearGradient id="r150" gradientUnits="userSpaceOnUse" x1="305.72" x2="707.87" y1="0" y2="0"><stop offset="-0.0000" stop-color="#01b0c8"/><stop offset="0.2238" stop-color="#c3c3c4"/><stop offset="0.2270" stop-color="#c4c2c4"/><stop offset="1.0000" stop-color="#c4040c"/></linearGradient><linearGradient id="r151" gradientUnits="userSpaceOnUse" x1="305.26" x2="704.24" y1="0" y2="0"><stop offset="-0.0000" stop-color="#01afc8"/><stop offset="0.2238" stop-color="#c2c2c4"/><stop offset="0.2333" stop-color="#c4bfc4"/><stop offset="1.0000" stop-color="#c4040f"/></linearGradient><linearGradient id="r152" gradientUnits="userSpaceOnUse" x1="304.80" x2="700.61" y1="0" y2="0"><stop offset="-0.0000" stop-color="#01adc8"/><stop offset="0.2238" stop-color="#c0c0c4"/><stop offset="0.2398" stop-color="#c4bcc4"/><stop offset="1.0000" stop-color="#c40412"/></linearGradient><linearGradient id="r153" gradientUnits="userSpaceOnUse" x1="304.34" x2="696.98" y1="0" y2="0"><stop offset="-0.0000" stop-color="#01acc8"/><stop offset="0.2238" stop-color="#bfbfc4"/><stop offset="0.2464" stop-color="#c4b9c4"/><stop offset="1.0000" stop-color="#c40415"/></linearGradient><linearGradient id="r154" gradientUnits="userSpaceOnUse" x1="303.88" x2="693.36" y1="0" y2="0"><stop offset="-0.0000" stop-color="#01aac8"/><stop offset="0.2238" stop-color="#bebdc4"/><stop offset="0.2531" stop-color="#c4b6c4"/><stop offset="1.0000" stop-color="#c40418"/></linearGradient><linearGradient id="r155" gradientUnits="userSpaceOnUse" x1="303.42" x2="689.73" y1="0" y2="0"><stop offset="-0.0000" stop-color="#01a9c8"/><stop offset="0.2238" stop-color="#bcbcc4"/><stop offset="0.2600" stop-color="#c4b3c4"/><stop offset="1.0000" stop-color="#c4041b"/></linearGradient><linearGradient id="r156" gradientUnits="userSpaceOnUse" x1="302.96" x2="686.10" y1="0" y2="0"><stop offset="-0.0000" stop-color="#02a8c7"/><stop offset="0.2238" stop-color="#bbbac4"/><stop offset="0.2669" stop-color="#c4b0c4"/><stop offset="1.0000" stop-color="#c5031e"/></linearGradient><linearGradient id="r157" gradientUnits="userSpaceOnUse" x1="302.50" x2="682.47" y1="0" y2="0"><stop offset="-0.0000" stop-color="#02a6c7"/><stop offset="0.2238" stop-color="#b9b8c4"/><stop offset="0.2739" stop-color="#c4adc4"/><stop offset="1.0000" stop-color="#c50321"/></linearGradient><linearGradient id="r158" gradientUnits="userSpaceOnUse" x1="302.04" x2="678.84" y1="0" y2="0"><stop offset="-0.0000" stop-color="#02a5c7"/><stop offset="0.2238" stop-color="#b8b7c4"/><stop offset="0.2811" stop-color="#c5a9c5"/><stop offset="1.0000" stop-color="#c50324"/></linearGradient><linearGradient id="r159" gradientUnits="userSpaceOnUse" x1="301.58" x2="675.22" y1="0" y2="0"><stop offset="-0.0000" stop-color="#02a3c7"/><stop offset="0.2238" stop-color="#b6b5c4"/><stop offset="0.2884" stop-color="#c5a6c5"/><stop offset="1.0000" stop-color="#c50327"/></linearGradient><linearGradient id="r160" gradientUnits="userSpaceOnUse" x1="301.12" x2="671.59" y1="0" y2="0"><stop offset="-0.0000" stop-color="#02a2c7"/><stop offset="0.2238" stop-color="#b5b4c4"/><stop offset="0.2958" stop-color="#c5a3c5"/><stop offset="1.0000" stop-color="#c5032a"/></linearGradient><linearGradient id="r161" gradientUnits="userSpaceOnUse" x1="300.66" x2="667.96" y1="0" y2="0"><stop offset="-0.0000" stop-color="#02a1c7"/><stop offset="0.2238" stop-color="#b3b2c4"/><stop offset="0.3033" stop-color="#c5a0c5"/><stop offset="1.0000" stop-color="#c5032d"/></linearGradient><linearGradient id="r162" gradientUnits="userSpaceOnUse" x1="300.20" x2="664.33" y1="0" y2="0"><stop offset="-0.0000" stop-color="#029fc7"/><stop offset="0.2238" stop-color="#b2b1c4"/><stop offset="0.3110" stop-color="#c59dc5"/><stop offset="1.0000" stop-color="#c50330"/></linearGradient><linearGradient id="r163" gradientUnits="userSpaceOnUse" x1="299.74" x2="660.70" y1="0" y2="0"><stop offset="-0.0000" stop-color="#029ec7"/><stop offset="0.2238" stop-color="#b1afc4"/><stop offset="0.3188" stop-color="#c59ac5"/><stop offset="1.0000" stop-color="#c50333"/></linearGradient><linearGradient id="r164" gradientUnits="userSpaceOnUse" x1="299.28" x2="657.08" y1="0" y2="0"><stop offset="-0.0000" stop-color="#029dc7"/><stop offset="0.2238" stop-color="#afaec4"/><stop offset="0.3268" stop-color="#c597c5"/><stop offset="1.0000" stop-color="#c50336"/></linearGradient><linearGradient id="r165" gradientUnits="userSpaceOnUse" x1="298.82" x2="653.45" y1="0" y2="0"><stop offset="-0.0000" stop-color="#029bc7"/><stop offset="0.2238" stop-color="#aeacc4"/><stop offset="0.3349" stop-color="#c594c5"/><stop offset="1.0000" stop-color="#c50339"/></linearGradient><linearGradient id="r166" gradientUnits="userSpaceOnUse" x1="298.36" x2="649.82" y1="0" y2="0"><stop offset="0.0000" stop-color="#029ac7"/><stop offset="0.2238" stop-color="#acabc4"/><stop offset="0.3431" stop-color="#c590c5"/><stop offset="1.0000" stop-color="#c5033c"/></linearGradient><linearGradient id="r167" gradientUnits="userSpaceOnUse" x1="297.90" x2="646.19" y1="0" y2="0"><stop offset="0.0000" stop-color="#0298c7"/><stop offset="0.2238" stop-color="#aba9c4"/><stop offset="0.3515" stop-color="#c58dc5"/><stop offset="1.0000" stop-color="#c5033f"/></linearGradient><linearGradient id="r168" gradientUnits="userSpaceOnUse" x1="297.44" x2="642.56" y1="0" y2="0"><stop offset="0.0000" stop-color="#0397c7"/><stop offset="0.2238" stop-color="#a9a8c4"/><stop offset="0.3600" stop-color="#c58ac5"/><stop offset="1.0000" stop-color="#c50342"/></linearGradient><linearGradient id="r169" gradientUnits="userSpaceOnUse" x1="296.98" x2="638.94" y1="0" y2="0"><stop offset="0.0000" stop-color="#0396c7"/><stop offset="0.2238" stop-color="#a8a6c4"/><stop offset="0.3687" stop-color="#c587c5"/><stop offset="1.0000" stop-color="#c50345"/></linearGradient><linearGradient id="r170" gradientUnits="userSpaceOnUse" x1="296.52" x2="635.31" y1="0" y2="0"><stop offset="0.0000" stop-color="#0394c7"/><stop offset="0.2238" stop-color="#a6a4c4"/><stop offset="0.3776" stop-color="#c584c5"/><stop offset="1.0000" stop-color="#c50348"/></linearGradient><linearGradient id="r171" gradientUnits="userSpaceOnUse" x1="296.06" x2="631.68" y1="0" y2="0"><stop offset="0.0000" stop-color="#0393c7"/><stop offset="0.2238" stop-color="#a5a3c4"/><stop offset="0.3866" stop-color="#c581c5"/><stop offset="1.0000" stop-color="#c5034b"/></linearGradient><linearGradient id="r172" gradientUnits="userSpaceOnUse" x1="295.60" x2="628.05" y1="0" y2="0"><stop offset="0.0000" stop-color="#0391c7"/><stop offset="0.2238" stop-color="#a4a1c4"/><stop offset="0.3958" stop-color="#c57ec5"/><stop offset="1.0000" stop-color="#c6024e"/></linearGradient><linearGradient id="r173" gradientUnits="userSpaceOnUse" x1="295.14" x2="624.42" y1="0" y2="0"><stop offset="0.0000" stop-color="#0390c7"/><stop offset="0.2238" stop-color="#a2a0c4"/><stop offset="0.4052" stop-color="#c57bc5"/><stop offset="1.0000" stop-color="#c60251"/></linearGradient><linearGradient id="r174" gradientUnits="userSpaceOnUse" x1="294.68" x2="620.80" y1="0" y2="0"><stop offset="0.0000" stop-color="#038fc7"/><stop offset="0.2238" stop-color="#a19ec4"/><stop offset="0.4147" stop-color="#c677c6"/><stop offset="1.0000" stop-color="#c60254"/></linearGradient><linearGradient id="r175" gradientUnits="userSpaceOnUse" x1="294.22" x2="617.17" y1="0" y2="0"><stop offset="0.0000" stop-color="#038dc7"/><stop offset="0.2238" stop-color="#9f9dc4"/><stop offset="0.4244" stop-color="#c674c6"/><stop offset="1.0000" stop-color="#c60258"/></linearGradient><linearGradient id="r176" gradientUnits="userSpaceOnUse" x1="293.76" x2="613.54" y1="0" y2="0"><stop offset="0.0000" stop-color="#038cc7"/><stop offset="0.2238" stop-color="#9e9bc4"/><stop offset="0.4344" stop-color="#c671c6"/><stop offset="1.0000" stop-color="#c6025b"/></linearGradient><linearGradient id="r177" gradientUnits="userSpaceOnUse" x1="293.30" x2="609.91" y1="0" y2="0"><stop offset="0.0000" stop-color="#038bc7"/><stop offset="0.2238" stop-color="#9c9ac4"/><stop offset="0.4445" stop-color="#c66ec6"/><stop offset="1.0000" stop-color="#c6025e"/></linearGradient><linearGradient id="r178" gradientUnits="userSpaceOnUse" x1="292.84" x2="606.28" y1="0" y2="0"><stop offset="0.0000" stop-color="#0389c7"/><stop offset="0.2238" stop-color="#9b98c4"/><stop offset="0.4549" stop-color="#c66bc6"/><stop offset="1.0000" stop-color="#c60261"/></linearGradient><linearGradient id="r179" gradientUnits="userSpaceOnUse" x1="292.38" x2="602.66" y1="0" y2="0"><stop offset="0.0000" stop-color="#0488c7"/><stop offset="0.2238" stop-color="#9997c4"/><stop offset="0.4654" stop-color="#c668c6"/><stop offset="1.0000" stop-color="#c60264"/></linearGradient><linearGradient id="r180" gradientUnits="userSpaceOnUse" x1="291.92" x2="599.03" y1="0" y2="0"><stop offset="0.0000" stop-color="#0486c7"/><stop offset="0.2238" stop-color="#9895c4"/><stop offset="0.4762" stop-color="#c665c6"/><stop offset="1.0000" stop-color="#c60267"/></linearGradient><linearGradient id="r181" gradientUnits="userSpaceOnUse" x1="291.46" x2="595.40" y1="0" y2="0"><stop offset="0.0000" stop-color="#0485c7"/><stop offset="0.2238" stop-color="#9794c4"/><stop offset="0.4871" stop-color="#c661c6"/><stop offset="1.0000" stop-color="#c6026a"/></linearGradient><linearGradient id="r182" gradientUnits="userSpaceOnUse" x1="291.00" x2="591.77" y1="0" y2="0"><stop offset="0.0000" stop-color="#0484c7"/><stop offset="0.2238" stop-color="#9592c4"/><stop offset="0.4984" stop-color="#c65ec6"/><stop offset="1.0000" stop-color="#c6026d"/></linearGradient><linearGradient id="r183" gradientUnits="userSpaceOnUse" x1="290.54" x2="588.15" y1="0" y2="0"><stop offset="0.0000" stop-color="#0482c7"/><stop offset="0.2238" stop-color="#9490c4"/><stop offset="0.5098" stop-color="#c65bc6"/><stop offset="1.0000" stop-color="#c60270"/></linearGradient><linearGradient id="r184" gradientUnits="userSpaceOnUse" x1="290.08" x2="584.52" y1="0" y2="0"><stop offset="0.0000" stop-color="#0481c7"/><stop offset="0.2238" stop-color="#928fc4"/><stop offset="0.5215" stop-color="#c658c6"/><stop offset="1.0000" stop-color="#c60273"/></linearGradient><linearGradient id="r185" gradientUnits="userSpaceOnUse" x1="289.62" x2="580.89" y1="0" y2="0"><stop offset="0.0000" stop-color="#047fc7"/><stop offset="0.2238" stop-color="#918dc4"/><stop offset="0.5335" stop-color="#c655c6"/><stop offset="1.0000" stop-color="#c60276"/></linearGradient><linearGradient id="r186" gradientUnits="userSpaceOnUse" x1="289.16" x2="577.26" y1="0" y2="0"><stop offset="0.0000" stop-color="#047ec7"/><stop offset="0.2238" stop-color="#8f8cc4"/><stop offset="0.5457" stop-color="#c652c6"/><stop offset="1.0000" stop-color="#c60279"/></linearGradient><linearGradient id="r187" gradientUnits="userSpaceOnUse" x1="288.70" x2="573.63" y1="0" y2="0"><stop offset="0.0000" stop-color="#047dc7"/><stop offset="0.2238" stop-color="#8e8ac4"/><stop offset="0.5582" stop-color="#c64fc6"/><stop offset="1.0000" stop-color="#c6027c"/></linearGradient><linearGradient id="r188" gradientUnits="userSpaceOnUse" x1="288.24" x2="570.01" y1="0" y2="0"><stop offset="0.0000" stop-color="#047bc7"/><stop offset="0.2238" stop-color="#8c89c4"/><stop offset="0.5710" stop-color="#c64cc6"/><stop offset="1.0000" stop-color="#c7017f"/></linearGradient><linearGradient id="r189" gradientUnits="userSpaceOnUse" x1="287.78" x2="566.38" y1="0" y2="0"><stop offset="0.0000" stop-color="#047ac7"/><stop offset="0.2238" stop-color="#8b87c4"/><stop offset="0.5841" stop-color="#c748c7"/><stop offset="1.0000" stop-color="#c70182"/></linearGradient><linearGradient id="r190" gradientUnits="userSpaceOnUse" x1="287.31" x2="562.75" y1="0" y2="0"><stop offset="-0.0000" stop-color="#0479c7"/><stop offset="0.2238" stop-color="#8a86c4"/><stop offset="0.5974" stop-color="#c745c7"/><stop offset="1.0000" stop-color="#c70185"/></linearGradient><linearGradient id="r191" gradientUnits="userSpaceOnUse" x1="286.85" x2="559.12" y1="0" y2="0"><stop offset="-0.0000" stop-color="#0577c6"/><stop offset="0.2238" stop-color="#8884c4"/><stop offset="0.6111" stop-color="#c742c7"/><stop offset="1.0000" stop-color="#c70188"/></linearGradient><linearGradient id="r192" gradientUnits="userSpaceOnUse" x1="286.39" x2="555.49" y1="0" y2="0"><stop offset="-0.0000" stop-color="#0576c6"/><stop offset="0.2238" stop-color="#8783c4"/><stop offset="0.6251" stop-color="#c73fc7"/><stop offset="1.0000" stop-color="#c7018b"/></linearGradient><linearGradient id="r193" gradientUnits="userSpaceOnUse" x1="285.93" x2="551.87" y1="0" y2="0"><stop offset="-0.0000" stop-color="#0574c6"/><stop offset="0.2238" stop-color="#8581c4"/><stop offset="0.6395" stop-color="#c73cc7"/><stop offset="1.0000" stop-color="#c7018e"/></linearGradient><linearGradient id="r194" gradientUnits="userSpaceOnUse" x1="285.47" x2="548.24" y1="0" y2="0"><stop offset="-0.0000" stop-color="#0573c6"/><stop offset="0.2238" stop-color="#8480c4"/><stop offset="0.6541" stop-color="#c739c7"/><stop offset="1.0000" stop-color="#c70191"/></linearGradient><linearGradient id="r195" gradientUnits="userSpaceOnUse" x1="285.01" x2="544.61" y1="0" y2="0"><stop offset="-0.0000" stop-color="#0572c6"/><stop offset="0.2238" stop-color="#827ec4"/><stop offset="0.6692" stop-color="#c736c7"/><stop offset="1.0000" stop-color="#c70194"/></linearGradient><linearGradient id="r196" gradientUnits="userSpaceOnUse" x1="284.55" x2="540.98" y1="0" y2="0"><stop offset="-0.0000" stop-color="#0570c6"/><stop offset="0.2238" stop-color="#817cc4"/><stop offset="0.6846" stop-color="#c733c7"/><stop offset="1.0000" stop-color="#c70197"/></linearGradient><linearGradient id="r197" gradientUnits="userSpaceOnUse" x1="284.09" x2="537.35" y1="0" y2="0"><stop offset="-0.0000" stop-color="#056fc6"/><stop offset="0.2238" stop-color="#7f7bc4"/><stop offset="0.7004" stop-color="#c72fc7"/><stop offset="1.0000" stop-color="#c7019a"/></linearGradient><linearGradient id="r198" gradientUnits="userSpaceOnUse" x1="283.63" x2="533.73" y1="0" y2="0"><stop offset="-0.0000" stop-color="#056dc6"/><stop offset="0.2238" stop-color="#7e79c4"/><stop offset="0.7166" stop-color="#c72cc7"/><stop offset="1.0000" stop-color="#c7019d"/></linearGradient><linearGradient id="r199" gradientUnits="userSpaceOnUse" x1="283.17" x2="530.10" y1="0" y2="0"><stop offset="-0.0000" stop-color="#056cc6"/><stop offset="0.2238" stop-color="#7d78c4"/><stop offset="0.7332" stop-color="#c729c7"/><stop offset="1.0000" stop-color="#c701a0"/></linearGradient><linearGradient id="r200" gradientUnits="userSpaceOnUse" x1="282.71" x2="526.47" y1="0" y2="0"><stop offset="-0.0000" stop-color="#056bc6"/><stop offset="0.2238" stop-color="#7b76c4"/><stop offset="0.7502" stop-color="#c726c7"/><stop offset="1.0000" stop-color="#c701a3"/></linearGradient><linearGradient id="r201" gradientUnits="userSpaceOnUse" x1="282.25" x2="522.84" y1="0" y2="0"><stop offset="-0.0000" stop-color="#0569c6"/><stop offset="0.2238" stop-color="#7a75c4"/><stop offset="0.7678" stop-color="#c723c7"/><stop offset="1.0000" stop-color="#c701a6"/></linearGradient><linearGradient id="r202" gradientUnits="userSpaceOnUse" x1="281.79" x2="519.21" y1="0" y2="0"><stop offset="-0.0000" stop-color="#0668c6"/><stop offset="0.2238" stop-color="#7873c4"/><stop offset="0.7857" stop-color="#c720c7"/><stop offset="1.0000" stop-color="#c701a9"/></linearGradient><linearGradient id="r203" gradientUnits="userSpaceOnUse" x1="281.33" x2="515.59" y1="0" y2="0"><stop offset="-0.0000" stop-color="#0666c6"/><stop offset="0.2238" stop-color="#7772c4"/><stop offset="0.8042" stop-color="#c71dc7"/><stop offset="1.0000" stop-color="#c701ac"/></linearGradient><linearGradient id="r204" gradientUnits="userSpaceOnUse" x1="280.87" x2="511.96" y1="0" y2="0"><stop offset="-0.0000" stop-color="#0665c6"/><stop offset="0.2238" stop-color="#7570c4"/><stop offset="0.8231" stop-color="#c71ac7"/><stop offset="1.0000" stop-color="#c701af"/></linearGradient><linearGradient id="r205" gradientUnits="userSpaceOnUse" x1="280.41" x2="508.33" y1="0" y2="0"><stop offset="-0.0000" stop-color="#0664c6"/><stop offset="0.2238" stop-color="#746fc4"/><stop offset="0.8426" stop-color="#c816c8"/><stop offset="1.0000" stop-color="#c800b2"/></linearGradient><linearGradient id="r206" gradientUnits="userSpaceOnUse" x1="279.95" x2="504.70" y1="0" y2="0"><stop offset="-0.0000" stop-color="#0662c6"/><stop offset="0.2238" stop-color="#726dc4"/><stop offset="0.8626" stop-color="#c813c8"/><stop offset="1.0000" stop-color="#c800b5"/></linearGradient><linearGradient id="r207" gradientUnits="userSpaceOnUse" x1="279.49" x2="501.07" y1="0" y2="0"><stop offset="-0.0000" stop-color="#0661c6"/><stop offset="0.2238" stop-color="#716cc4"/><stop offset="0.8832" stop-color="#c810c8"/><stop offset="1.0000" stop-color="#c800b8"/></linearGradient><linearGradient id="r208" gradientUnits="userSpaceOnUse" x1="279.03" x2="497.45" y1="0" y2="0"><stop offset="-0.0000" stop-color="#0660c6"/><stop offset="0.2238" stop-color="#706ac4"/><stop offset="0.9044" stop-color="#c80dc8"/><stop offset="1.0000" stop-color="#c800bb"/></linearGradient><linearGradient id="r209" gradientUnits="userSpaceOnUse" x1="278.57" x2="493.82" y1="0" y2="0"><stop offset="-0.0000" stop-color="#065ec6"/><stop offset="0.2238" stop-color="#6e68c4"/><stop offset="0.9262" stop-color="#c80ac8"/><stop offset="1.0000" stop-color="#c800be"/></linearGradient><linearGradient id="r210" gradientUnits="userSpaceOnUse" x1="278.11" x2="490.19" y1="0" y2="0"><stop offset="-0.0000" stop-color="#065dc6"/><stop offset="0.2238" stop-color="#6d67c4"/><stop offset="0.9487" stop-color="#c807c8"/><stop offset="1.0000" stop-color="#c800c1"/></linearGradient><linearGradient id="r211" gradientUnits="userSpaceOnUse" x1="277.65" x2="486.56" y1="0" y2="0"><stop offset="-0.0000" stop-color="#065bc6"/><stop offset="0.2238" stop-color="#6b65c4"/><stop offset="0.9719" stop-color="#c804c8"/><stop offset="1.0000" stop-color="#c800c4"/></linearGradient><linearGradient id="r212" gradientUnits="userSpaceOnUse" x1="277.19" x2="482.93" y1="0" y2="0"><stop offset="-0.0000" stop-color="#065ac6"/><stop offset="0.2238" stop-color="#6a64c4"/><stop offset="0.9957" stop-color="#c801c8"/><stop offset="1.0000" stop-color="#c800c7"/></linearGradient><linearGradient id="r213" gradientUnits="userSpaceOnUse" x1="276.73" x2="479.31" y1="0" y2="0"><stop offset="-0.0000" stop-color="#0659c6"/><stop offset="0.2238" stop-color="#6862c4"/><stop offset="1.0000" stop-color="#c600c8"/></linearGradient><linearGradient id="r214" gradientUnits="userSpaceOnUse" x1="276.27" x2="475.68" y1="0" y2="0"><stop offset="0.0000" stop-color="#0757c6"/><stop offset="0.2238" stop-color="#6761c4"/><stop offset="1.0000" stop-color="#c300c8"/></linearGradient><linearGradient id="r215" gradientUnits="userSpaceOnUse" x1="275.81" x2="472.05" y1="0" y2="0"><stop offset="0.0000" stop-color="#0756c6"/><stop offset="0.2238" stop-color="#655fc4"/><stop offset="1.0000" stop-color="#c000c8"/></linearGradient><linearGradient id="r216" gradientUnits="userSpaceOnUse" x1="275.35" x2="468.42" y1="0" y2="0"><stop offset="0.0000" stop-color="#0754c6"/><stop offset="0.2238" stop-color="#645ec4"/><stop offset="1.0000" stop-color="#bd00c8"/></linearGradient><linearGradient id="r217" gradientUnits="userSpaceOnUse" x1="274.89" x2="464.80" y1="0" y2="0"><stop offset="0.0000" stop-color="#0753c6"/><stop offset="0.2238" stop-color="#635cc4"/><stop offset="1.0000" stop-color="#ba00c8"/></linearGradient><linearGradient id="r218" gradientUnits="userSpaceOnUse" x1="274.43" x2="461.17" y1="0" y2="0"><stop offset="0.0000" stop-color="#0752c6"/><stop offset="0.2238" stop-color="#615bc4"/><stop offset="1.0000" stop-color="#b700c8"/></linearGradient><linearGradient id="r219" gradientUnits="userSpaceOnUse" x1="273.97" x2="457.54" y1="0" y2="0"><stop offset="0.0000" stop-color="#0750c6"/><stop offset="0.2238" stop-color="#6059c4"/><stop offset="1.0000" stop-color="#b400c8"/></linearGradient><linearGradient id="r220" gradientUnits="userSpaceOnUse" x1="273.51" x2="453.91" y1="0" y2="0"><stop offset="0.0000" stop-color="#074fc6"/><stop offset="0.2238" stop-color="#5e58c4"/><stop offset="1.0000" stop-color="#b100c8"/></linearGradient><linearGradient id="r221" gradientUnits="userSpaceOnUse" x1="273.05" x2="450.28" y1="0" y2="0"><stop offset="0.0000" stop-color="#074ec6"/><stop offset="0.2238" stop-color="#5d56c4"/><stop offset="1.0000" stop-color="#ae00c7"/></linearGradient><linearGradient id="r222" gradientUnits="userSpaceOnUse" x1="272.59" x2="446.66" y1="0" y2="0"><stop offset="0.0000" stop-color="#074cc6"/><stop offset="0.2238" stop-color="#5b55c4"/><stop offset="1.0000" stop-color="#ab00c7"/></linearGradient><linearGradient id="r223" gradientUnits="userSpaceOnUse" x1="272.13" x2="443.03" y1="0" y2="0"><stop offset="0.0000" stop-color="#074bc6"/><stop offset="0.2238" stop-color="#5a53c4"/><stop offset="1.0000" stop-color="#a900c7"/></linearGradient><linearGradient id="r224" gradientUnits="userSpaceOnUse" x1="271.67" x2="439.40" y1="0" y2="0"><stop offset="0.0000" stop-color="#0749c6"/><stop offset="0.2238" stop-color="#5851c4"/><stop offset="1.0000" stop-color="#a600c7"/></linearGradient><linearGradient id="r225" gradientUnits="userSpaceOnUse" x1="271.21" x2="435.77" y1="0" y2="0"><stop offset="0.0000" stop-color="#0848c5"/><stop offset="0.2238" stop-color="#5750c4"/><stop offset="1.0000" stop-color="#a300c7"/></linearGradient><linearGradient id="r226" gradientUnits="userSpaceOnUse" x1="270.75" x2="432.14" y1="0" y2="0"><stop offset="0.0000" stop-color="#0847c5"/><stop offset="0.2238" stop-color="#564ec4"/><stop offset="1.0000" stop-color="#a000c7"/></linearGradient><linearGradient id="r227" gradientUnits="userSpaceOnUse" x1="270.29" x2="428.52" y1="0" y2="0"><stop offset="0.0000" stop-color="#0845c5"/><stop offset="0.2238" stop-color="#544dc4"/><stop offset="1.0000" stop-color="#9d00c7"/></linearGradient><linearGradient id="r228" gradientUnits="userSpaceOnUse" x1="269.83" x2="424.89" y1="0" y2="0"><stop offset="0.0000" stop-color="#0844c5"/><stop offset="0.2238" stop-color="#534bc4"/><stop offset="1.0000" stop-color="#9a00c7"/></linearGradient><linearGradient id="r229" gradientUnits="userSpaceOnUse" x1="269.37" x2="421.26" y1="0" y2="0"><stop offset="0.0000" stop-color="#0842c5"/><stop offset="0.2238" stop-color="#514ac4"/><stop offset="1.0000" stop-color="#9700c7"/></linearGradient><linearGradient id="r230" gradientUnits="userSpaceOnUse" x1="268.91" x2="417.63" y1="0" y2="0"><stop offset="0.0000" stop-color="#0841c5"/><stop offset="0.2238" stop-color="#5048c4"/><stop offset="1.0000" stop-color="#9400c7"/></linearGradient><linearGradient id="r231" gradientUnits="userSpaceOnUse" x1="268.45" x2="414.00" y1="0" y2="0"><stop offset="0.0000" stop-color="#0840c5"/><stop offset="0.2238" stop-color="#4e47c4"/><stop offset="1.0000" stop-color="#9100c7"/></linearGradient><linearGradient id="r232" gradientUnits="userSpaceOnUse" x1="267.99" x2="410.38" y1="0" y2="0"><stop offset="0.0000" stop-color="#083ec5"/><stop offset="0.2238" stop-color="#4d45c4"/><stop offset="1.0000" stop-color="#8e00c7"/></linearGradient><linearGradient id="r233" gradientUnits="userSpaceOnUse" x1="267.53" x2="406.75" y1="0" y2="0"><stop offset="0.0000" stop-color="#083dc5"/><stop offset="0.2238" stop-color="#4b44c4"/><stop offset="1.0000" stop-color="#8c00c7"/></linearGradient><linearGradient id="r234" gradientUnits="userSpaceOnUse" x1="267.07" x2="403.12" y1="0" y2="0"><stop offset="0.0000" stop-color="#083cc5"/><stop offset="0.2238" stop-color="#4a42c4"/><stop offset="1.0000" stop-color="#8900c7"/></linearGradient><linearGradient id="r235" gradientUnits="userSpaceOnUse" x1="266.61" x2="399.49" y1="0" y2="0"><stop offset="0.0000" stop-color="#083ac5"/><stop offset="0.2238" stop-color="#4941c4"/><stop offset="1.0000" stop-color="#8600c7"/></linearGradient><linearGradient id="r236" gradientUnits="userSpaceOnUse" x1="266.15" x2="395.86" y1="0" y2="0"><stop offset="0.0000" stop-color="#0839c5"/><stop offset="0.2237" stop-color="#473fc4"/><stop offset="1.0000" stop-color="#8300c7"/></linearGradient><linearGradient id="r237" gradientUnits="userSpaceOnUse" x1="265.69" x2="392.24" y1="0" y2="0"><stop offset="0.0000" stop-color="#0937c5"/><stop offset="0.2237" stop-color="#463dc4"/><stop offset="1.0000" stop-color="#8000c6"/></linearGradient><linearGradient id="r238" gradientUnits="userSpaceOnUse" x1="265.23" x2="388.61" y1="0" y2="0"><stop offset="0.0000" stop-color="#0936c5"/><stop offset="0.2238" stop-color="#443cc4"/><stop offset="1.0000" stop-color="#7d00c6"/></linearGradient><linearGradient id="r239" gradientUnits="userSpaceOnUse" x1="264.76" x2="384.98" y1="0" y2="0"><stop offset="-0.0000" stop-color="#0935c5"/><stop offset="0.2238" stop-color="#433ac4"/><stop offset="1.0000" stop-color="#7a00c6"/></linearGradient><linearGradient id="r240" gradientUnits="userSpaceOnUse" x1="264.30" x2="381.35" y1="0" y2="0"><stop offset="-0.0000" stop-color="#0933c5"/><stop offset="0.2238" stop-color="#4139c4"/><stop offset="1.0000" stop-color="#7700c6"/></linearGradient><linearGradient id="r241" gradientUnits="userSpaceOnUse" x1="263.84" x2="377.72" y1="0" y2="0"><stop offset="-0.0000" stop-color="#0932c5"/><stop offset="0.2238" stop-color="#4037c4"/><stop offset="1.0000" stop-color="#7400c6"/></linearGradient><linearGradient id="r242" gradientUnits="userSpaceOnUse" x1="263.38" x2="374.10" y1="0" y2="0"><stop offset="-0.0000" stop-color="#0930c5"/><stop offset="0.2238" stop-color="#3e36c4"/><stop offset="1.0000" stop-color="#7100c6"/></linearGradient><linearGradient id="r243" gradientUnits="userSpaceOnUse" x1="262.92" x2="370.47" y1="0" y2="0"><stop offset="-0.0000" stop-color="#092fc5"/><stop offset="0.2238" stop-color="#3d34c4"/><stop offset="1.0000" stop-color="#6f00c6"/></linearGradient><linearGradient id="r244" gradientUnits="userSpaceOnUse" x1="262.46" x2="366.84" y1="0" y2="0"><stop offset="-0.0000" stop-color="#092ec5"/><stop offset="0.2238" stop-color="#3c33c4"/><stop offset="1.0000" stop-color="#6c00c6"/></linearGradient><linearGradient id="r245" gradientUnits="userSpaceOnUse" x1="262.00" x2="363.21" y1="0" y2="0"><stop offset="-0.0000" stop-color="#092cc5"/><stop offset="0.2238" stop-color="#3a31c4"/><stop offset="1.0000" stop-color="#6900c6"/></linearGradient><linearGradient id="r246" gradientUnits="userSpaceOnUse" x1="261.54" x2="359.58" y1="0" y2="0"><stop offset="-0.0000" stop-color="#092bc5"/><stop offset="0.2237" stop-color="#3930c4"/><stop offset="1.0000" stop-color="#6600c6"/></linearGradient><linearGradient id="r247" gradientUnits="userSpaceOnUse" x1="261.08" x2="355.96" y1="0" y2="0"><stop offset="-0.0000" stop-color="#092ac5"/><stop offset="0.2237" stop-color="#372ec4"/><stop offset="1.0000" stop-color="#6300c6"/></linearGradient><linearGradient id="r248" gradientUnits="userSpaceOnUse" x1="260.62" x2="352.33" y1="0" y2="0"><stop offset="-0.0000" stop-color="#0a28c5"/><stop offset="0.2238" stop-color="#362dc4"/><stop offset="1.0000" stop-color="#6000c6"/></linearGradient><linearGradient id="r249" gradientUnits="userSpaceOnUse" x1="260.16" x2="348.70" y1="0" y2="0"><stop offset="-0.0000" stop-color="#0a27c5"/><stop offset="0.2238" stop-color="#342bc4"/><stop offset="1.0000" stop-color="#5d00c6"/></linearGradient><linearGradient id="r250" gradientUnits="userSpaceOnUse" x1="259.70" x2="345.07" y1="0" y2="0"><stop offset="-0.0000" stop-color="#0a25c5"/><stop offset="0.2238" stop-color="#3329c4"/><stop offset="1.0000" stop-color="#5a00c6"/></linearGradient><linearGradient id="r251" gradientUnits="userSpaceOnUse" x1="259.24" x2="341.45" y1="0" y2="0"><stop offset="-0.0000" stop-color="#0a24c5"/><stop offset="0.2238" stop-color="#3128c4"/><stop offset="1.0001" stop-color="#5700c6"/></linearGradient><linearGradient id="r252" gradientUnits="userSpaceOnUse" x1="258.78" x2="337.82" y1="0" y2="0"><stop offset="-0.0000" stop-color="#0a23c5"/><stop offset="0.2238" stop-color="#3026c4"/><stop offset="1.0000" stop-color="#5400c6"/></linearGradient><linearGradient id="r253" gradientUnits="userSpaceOnUse" x1="258.32" x2="334.19" y1="0" y2="0"><stop offset="-0.0000" stop-color="#0a21c5"/><stop offset="0.2238" stop-color="#2f25c4"/><stop offset="1.0000" stop-color="#5200c5"/></linearGradient><linearGradient id="r254" gradientUnits="userSpaceOnUse" x1="257.86" x2="330.56" y1="0" y2="0"><stop offset="-0.0000" stop-color="#0a20c5"/><stop offset="0.2238" stop-color="#2d23c4"/><stop offset="1.0000" stop-color="#4f00c5"/></linearGradient><linearGradient id="r255" gradientUnits="userSpaceOnUse" x1="257.40" x2="326.93" y1="0" y2="0"><stop offset="-0.0000" stop-color="#0a1ec5"/><stop offset="0.2238" stop-color="#2c22c4"/><stop offset="1.0000" stop-color="#4c00c5"/></linearGradient><linearGradient id="r256" gradientUnits="userSpaceOnUse" x1="256.94" x2="323.31" y1="0" y2="0"><stop offset="-0.0000" stop-color="#0a1dc5"/><stop offset="0.2237" stop-color="#2a20c4"/><stop offset="1.0001" stop-color="#4900c5"/></linearGradient><linearGradient id="r257" gradientUnits="userSpaceOnUse" x1="256.48" x2="319.68" y1="0" y2="0"><stop offset="-0.0000" stop-color="#0a1cc5"/><stop offset="0.2237" stop-color="#291fc4"/><stop offset="1.0000" stop-color="#4600c5"/></linearGradient><linearGradient id="r258" gradientUnits="userSpaceOnUse" x1="256.02" x2="316.05" y1="0" y2="0"><stop offset="-0.0000" stop-color="#0a1ac5"/><stop offset="0.2237" stop-color="#271dc4"/><stop offset="1.0000" stop-color="#4300c5"/></linearGradient><linearGradient id="r259" gradientUnits="userSpaceOnUse" x1="255.56" x2="312.42" y1="0" y2="0"><stop offset="-0.0000" stop-color="#0a19c5"/><stop offset="0.2239" stop-color="#261cc4"/><stop offset="1.0000" stop-color="#4000c5"/></linearGradient><linearGradient id="r260" gradientUnits="userSpaceOnUse" x1="255.10" x2="308.79" y1="0" y2="0"><stop offset="-0.0000" stop-color="#0b17c4"/><stop offset="0.2239" stop-color="#241ac4"/><stop offset="0.9999" stop-color="#3d00c5"/></linearGradient><linearGradient id="r261" gradientUnits="userSpaceOnUse" x1="254.64" x2="305.17" y1="0" y2="0"><stop offset="-0.0000" stop-color="#0b16c4"/><stop offset="0.2238" stop-color="#2319c4"/><stop offset="1.0001" stop-color="#3a00c5"/></linearGradient><linearGradient id="r262" gradientUnits="userSpaceOnUse" x1="254.18" x2="301.54" y1="0" y2="0"><stop offset="-0.0000" stop-color="#0b15c4"/><stop offset="0.2238" stop-color="#2217c4"/><stop offset="1.0000" stop-color="#3700c5"/></linearGradient><linearGradient id="r263" gradientUnits="userSpaceOnUse" x1="253.72" x2="297.91" y1="0" y2="0"><stop offset="0.0000" stop-color="#0b13c4"/><stop offset="0.2238" stop-color="#2015c4"/><stop offset="1.0000" stop-color="#3400c5"/></linearGradient><linearGradient id="r264" gradientUnits="userSpaceOnUse" x1="253.26" x2="294.28" y1="0" y2="0"><stop offset="0.0000" stop-color="#0b12c4"/><stop offset="0.2238" stop-color="#1f14c4"/><stop offset="1.0000" stop-color="#3200c5"/></linearGradient><linearGradient id="r265" gradientUnits="userSpaceOnUse" x1="252.80" x2="290.65" y1="0" y2="0"><stop offset="0.0000" stop-color="#0b11c4"/><stop offset="0.2238" stop-color="#1d12c4"/><stop offset="0.9999" stop-color="#2f00c5"/></linearGradient><linearGradient id="r266" gradientUnits="userSpaceOnUse" x1="252.34" x2="287.03" y1="0" y2="0"><stop offset="0.0000" stop-color="#0b0fc4"/><stop offset="0.2237" stop-color="#1c11c4"/><stop offset="1.0001" stop-color="#2c00c5"/></linearGradient><linearGradient id="r267" gradientUnits="userSpaceOnUse" x1="251.88" x2="283.40" y1="0" y2="0"><stop offset="0.0000" stop-color="#0b0ec4"/><stop offset="0.2237" stop-color="#1a0fc4"/><stop offset="1.0001" stop-color="#2900c5"/></linearGradient><linearGradient id="r268" gradientUnits="userSpaceOnUse" x1="251.42" x2="279.77" y1="0" y2="0"><stop offset="0.0000" stop-color="#0b0cc4"/><stop offset="0.2237" stop-color="#190ec4"/><stop offset="1.0000" stop-color="#2600c5"/></linearGradient><linearGradient id="r269" gradientUnits="userSpaceOnUse" x1="250.96" x2="276.14" y1="0" y2="0"><stop offset="0.0001" stop-color="#0b0bc4"/><stop offset="0.2236" stop-color="#170cc4"/><stop offset="0.9999" stop-color="#2300c4"/></linearGradient><linearGradient id="r270" gradientUnits="userSpaceOnUse" x1="250.50" x2="272.51" y1="0" y2="0"><stop offset="0.0001" stop-color="#0b0ac4"/><stop offset="0.2240" stop-color="#160bc4"/><stop offset="0.9998" stop-color="#2000c4"/></linearGradient><linearGradient id="r271" gradientUnits="userSpaceOnUse" x1="250.04" x2="268.89" y1="0" y2="0"><stop offset="0.0001" stop-color="#0c08c4"/><stop offset="0.2240" stop-color="#1509c4"/><stop offset="1.0002" stop-color="#1d00c4"/></linearGradient><linearGradient id="r272" gradientUnits="userSpaceOnUse" x1="249.58" x2="265.26" y1="0" y2="0"><stop offset="0.0001" stop-color="#0c07c4"/><stop offset="0.2240" stop-color="#1308c4"/><stop offset="1.0001" stop-color="#1a00c4"/></linearGradient><linearGradient id="r273" gradientUnits="userSpaceOnUse" x1="249.12" x2="261.63" y1="0" y2="0"><stop offset="0.0002" stop-color="#0c05c4"/><stop offset="0.2239" stop-color="#1206c4"/><stop offset="1.0000" stop-color="#1700c4"/></linearGradient><linearGradient id="r274" gradientUnits="userSpaceOnUse" x1="248.66" x2="258.00" y1="0" y2="0"><stop offset="0.0003" stop-color="#0c04c4"/><stop offset="0.2239" stop-color="#1005c4"/><stop offset="0.9997" stop-color="#1500c4"/></linearGradient><linearGradient id="r275" gradientUnits="userSpaceOnUse" x1="248.20" x2="254.37" y1="0" y2="0"><stop offset="0.0004" stop-color="#0c03c4"/><stop offset="0.2238" stop-color="#0f03c4"/><stop offset="0.9993" stop-color="#1200c4"/></linearGradient><linearGradient id="r276" gradientUnits="userSpaceOnUse" x1="247.74" x2="250.75" y1="0" y2="0"><stop offset="0.0009" stop-color="#0c01c4"/><stop offset="0.2236" stop-color="#0d01c4"/><stop offset="1.0011" stop-color="#0f00c4"/></linearGradient>
<linearGradient id="sgr" gradientUnits="userSpaceOnUse" x1="386.0" y1="473.0" x2="710.1" y2="728.6"><stop offset="0" stop-color="#30ff70"/><stop offset="0.5" stop-color="#a8ff50" stop-opacity="0.95"/><stop offset="0.78" stop-color="#c8c070" stop-opacity="0.75"/><stop offset="1" stop-color="#cc8478" stop-opacity="0.6"/></linearGradient>
<linearGradient id="sbg" gradientUnits="userSpaceOnUse" x1="243.0" y1="984.2" x2="386.0" y2="473.0"><stop offset="0" stop-color="#00e8e8"/><stop offset="0.5" stop-color="#10f0ff"/><stop offset="1" stop-color="#30ff70"/></linearGradient>
<linearGradient id="srb" gradientUnits="userSpaceOnUse" x1="710.1" y1="728.6" x2="243.0" y2="984.2"><stop offset="0" stop-color="#cc3858"/><stop offset="0.25" stop-color="#d040c0"/><stop offset="0.5" stop-color="#b040ff"/><stop offset="0.75" stop-color="#6048ff"/><stop offset="1" stop-color="#2848ff"/></linearGradient>
</defs>
<rect x="44" y="137" width="938" height="938" fill="#f0f0f0"/>
<rect x="99" y="188" width="861" height="855" fill="#000"/>
<g fill="#3b3b3b"><rect x="193" y="190" width="2" height="850"/><rect x="289" y="190" width="2" height="850"/><rect x="385" y="190" width="2" height="850"/><rect x="479" y="190" width="2" height="850"/><rect x="575" y="190" width="2" height="850"/><rect x="671" y="190" width="2" height="850"/><rect x="765" y="190" width="2" height="850"/><rect x="861" y="190" width="2" height="850"/><rect x="101" y="946" width="857" height="2"/><rect x="101" y="852" width="857" height="2"/><rect x="101" y="756" width="857" height="2"/><rect x="101" y="662" width="857" height="2"/><rect x="101" y="568" width="857" height="2"/><rect x="101" y="472" width="857" height="2"/><rect x="101" y="378" width="857" height="2"/><rect x="101" y="284" width="857" height="2"/></g>
<g clip-path="url(#tc)" shape-rendering="crispEdges"><rect x="373" y="431" width="4" height="2" fill="url(#r0)"/><rect x="373" y="433" width="6" height="2" fill="url(#r1)"/><rect x="372" y="435" width="9" height="2" fill="url(#r2)"/><rect x="372" y="437" width="11" height="2" fill="url(#r3)"/><rect x="371" y="439" width="15" height="2" fill="url(#r4)"/><rect x="371" y="441" width="17" height="2" fill="url(#r5)"/><rect x="370" y="443" width="20" height="2" fill="url(#r6)"/><rect x="370" y="445" width="23" height="2" fill="url(#r7)"/><rect x="370" y="447" width="25" height="2" fill="url(#r8)"/><rect x="369" y="449" width="28" height="2" fill="url(#r9)"/><rect x="369" y="451" width="31" height="2" fill="url(#r10)"/><rect x="368" y="453" width="34" height="2" fill="url(#r11)"/><rect x="368" y="455" width="36" height="2" fill="url(#r12)"/><rect x="367" y="457" width="40" height="2" fill="url(#r13)"/><rect x="367" y="459" width="42" height="2" fill="url(#r14)"/><rect x="366" y="461" width="45" height="2" fill="url(#r15)"/><rect x="366" y="463" width="48" height="2" fill="url(#r16)"/><rect x="365" y="465" width="51" height="2" fill="url(#r17)"/><rect x="365" y="467" width="53" height="2" fill="url(#r18)"/><rect x="365" y="469" width="56" height="2" fill="url(#r19)"/><rect x="364" y="471" width="59" height="2" fill="url(#r20)"/><rect x="364" y="473" width="61" height="2" fill="url(#r21)"/><rect x="363" y="475" width="65" height="2" fill="url(#r22)"/><rect x="363" y="477" width="67" height="2" fill="url(#r23)"/><rect x="362" y="479" width="70" height="2" fill="url(#r24)"/><rect x="362" y="481" width="73" height="2" fill="url(#r25)"/><rect x="361" y="483" width="76" height="2" fill="url(#r26)"/><rect x="361" y="485" width="78" height="2" fill="url(#r27)"/><rect x="360" y="487" width="82" height="2" fill="url(#r28)"/><rect x="360" y="489" width="84" height="2" fill="url(#r29)"/><rect x="359" y="491" width="87" height="2" fill="url(#r30)"/><rect x="359" y="493" width="90" height="2" fill="url(#r31)"/><rect x="359" y="495" width="92" height="2" fill="url(#r32)"/><rect x="358" y="497" width="95" height="2" fill="url(#r33)"/><rect x="358" y="499" width="97" height="2" fill="url(#r34)"/><rect x="357" y="501" width="101" height="2" fill="url(#r35)"/><rect x="357" y="503" width="103" height="2" fill="url(#r36)"/><rect x="356" y="505" width="106" height="2" fill="url(#r37)"/><rect x="356" y="507" width="109" height="2" fill="url(#r38)"/><rect x="355" y="509" width="112" height="2" fill="url(#r39)"/><rect x="355" y="511" width="114" height="2" fill="url(#r40)"/><rect x="354" y="513" width="118" height="2" fill="url(#r41)"/><rect x="354" y="515" width="120" height="2" fill="url(#r42)"/><rect x="353" y="517" width="123" height="2" fill="url(#r43)"/><rect x="353" y="519" width="126" height="2" fill="url(#r44)"/><rect x="353" y="521" width="128" height="2" fill="url(#r45)"/><rect x="352" y="523" width="131" height="2" fill="url(#r46)"/><rect x="352" y="525" width="134" height="2" fill="url(#r47)"/><rect x="351" y="527" width="137" height="2" fill="url(#r48)"/><rect x="351" y="529" width="139" height="2" fill="url(#r49)"/><rect x="350" y="531" width="143" height="2" fill="url(#r50)"/><rect x="350" y="533" width="145" height="2" fill="url(#r51)"/><rect x="349" y="535" width="148" height="2" fill="url(#r52)"/><rect x="349" y="537" width="151" height="2" fill="url(#r53)"/><rect x="348" y="539" width="154" height="2" fill="url(#r54)"/><rect x="348" y="541" width="156" height="2" fill="url(#r55)"/><rect x="347" y="543" width="160" height="2" fill="url(#r56)"/><rect x="347" y="545" width="162" height="2" fill="url(#r57)"/><rect x="347" y="547" width="164" height="2" fill="url(#r58)"/><rect x="346" y="549" width="168" height="2" fill="url(#r59)"/><rect x="346" y="551" width="170" height="2" fill="url(#r60)"/><rect x="345" y="553" width="173" height="2" fill="url(#r61)"/><rect x="345" y="555" width="175" height="2" fill="url(#r62)"/><rect x="344" y="557" width="179" height="2" fill="url(#r63)"/><rect x="344" y="559" width="181" height="2" fill="url(#r64)"/><rect x="343" y="561" width="184" height="2" fill="url(#r65)"/><rect x="343" y="563" width="187" height="2" fill="url(#r66)"/><rect x="342" y="565" width="190" height="2" fill="url(#r67)"/><rect x="342" y="567" width="192" height="2" fill="url(#r68)"/><rect x="341" y="569" width="196" height="2" fill="url(#r69)"/><rect x="341" y="571" width="198" height="2" fill="url(#r70)"/><rect x="341" y="573" width="200" height="2" fill="url(#r71)"/><rect x="340" y="575" width="204" height="2" fill="url(#r72)"/><rect x="340" y="577" width="206" height="2" fill="url(#r73)"/><rect x="339" y="579" width="209" height="2" fill="url(#r74)"/><rect x="339" y="581" width="212" height="2" fill="url(#r75)"/><rect x="338" y="583" width="215" height="2" fill="url(#r76)"/><rect x="338" y="585" width="217" height="2" fill="url(#r77)"/><rect x="337" y="587" width="221" height="2" fill="url(#r78)"/><rect x="337" y="589" width="223" height="2" fill="url(#r79)"/><rect x="336" y="591" width="226" height="2" fill="url(#r80)"/><rect x="336" y="593" width="229" height="2" fill="url(#r81)"/><rect x="336" y="595" width="231" height="2" fill="url(#r82)"/><rect x="335" y="597" width="234" height="2" fill="url(#r83)"/><rect x="335" y="599" width="237" height="2" fill="url(#r84)"/><rect x="334" y="601" width="240" height="2" fill="url(#r85)"/><rect x="334" y="603" width="242" height="2" fill="url(#r86)"/><rect x="333" y="605" width="246" height="2" fill="url(#r87)"/><rect x="333" y="607" width="248" height="2" fill="url(#r88)"/><rect x="332" y="609" width="251" height="2" fill="url(#r89)"/><rect x="332" y="611" width="254" height="2" fill="url(#r90)"/><rect x="331" y="613" width="257" height="2" fill="url(#r91)"/><rect x="331" y="615" width="259" height="2" fill="url(#r92)"/><rect x="330" y="617" width="262" height="2" fill="url(#r93)"/><rect x="330" y="619" width="265" height="2" fill="url(#r94)"/><rect x="330" y="621" width="267" height="2" fill="url(#r95)"/><rect x="329" y="623" width="270" height="2" fill="url(#r96)"/><rect x="329" y="625" width="273" height="2" fill="url(#r97)"/><rect x="328" y="627" width="276" height="2" fill="url(#r98)"/><rect x="328" y="629" width="278" height="2" fill="url(#r99)"/><rect x="327" y="631" width="282" height="2" fill="url(#r100)"/><rect x="327" y="633" width="284" height="2" fill="url(#r101)"/><rect x="326" y="635" width="287" height="2" fill="url(#r102)"/><rect x="326" y="637" width="290" height="2" fill="url(#r103)"/><rect x="325" y="639" width="293" height="2" fill="url(#r104)"/><rect x="325" y="641" width="295" height="2" fill="url(#r105)"/><rect x="324" y="643" width="299" height="2" fill="url(#r106)"/><rect x="324" y="645" width="301" height="2" fill="url(#r107)"/><rect x="324" y="647" width="303" height="2" fill="url(#r108)"/><rect x="323" y="649" width="307" height="2" fill="url(#r109)"/><rect x="323" y="651" width="309" height="2" fill="url(#r110)"/><rect x="322" y="653" width="312" height="2" fill="url(#r111)"/><rect x="322" y="655" width="315" height="2" fill="url(#r112)"/><rect x="321" y="657" width="318" height="2" fill="url(#r113)"/><rect x="321" y="659" width="320" height="2" fill="url(#r114)"/><rect x="320" y="661" width="324" height="2" fill="url(#r115)"/><rect x="320" y="663" width="326" height="2" fill="url(#r116)"/><rect x="319" y="665" width="329" height="2" fill="url(#r117)"/><rect x="319" y="667" width="332" height="2" fill="url(#r118)"/><rect x="318" y="669" width="335" height="2" fill="url(#r119)"/><rect x="318" y="671" width="337" height="2" fill="url(#r120)"/><rect x="318" y="673" width="339" height="2" fill="url(#r121)"/><rect x="317" y="675" width="343" height="2" fill="url(#r122)"/><rect x="317" y="677" width="345" height="2" fill="url(#r123)"/><rect x="316" y="679" width="348" height="2" fill="url(#r124)"/><rect x="316" y="681" width="351" height="2" fill="url(#r125)"/><rect x="315" y="683" width="354" height="2" fill="url(#r126)"/><rect x="315" y="685" width="356" height="2" fill="url(#r127)"/><rect x="314" y="687" width="360" height="2" fill="url(#r128)"/><rect x="314" y="689" width="362" height="2" fill="url(#r129)"/><rect x="313" y="691" width="365" height="2" fill="url(#r130)"/><rect x="313" y="693" width="368" height="2" fill="url(#r131)"/><rect x="313" y="695" width="370" height="2" fill="url(#r132)"/><rect x="312" y="697" width="373" height="2" fill="url(#r133)"/><rect x="312" y="699" width="376" height="2" fill="url(#r134)"/><rect x="311" y="701" width="379" height="2" fill="url(#r135)"/><rect x="311" y="703" width="381" height="2" fill="url(#r136)"/><rect x="310" y="705" width="385" height="2" fill="url(#r137)"/><rect x="310" y="707" width="387" height="2" fill="url(#r138)"/><rect x="309" y="709" width="390" height="2" fill="url(#r139)"/><rect x="309" y="711" width="393" height="2" fill="url(#r140)"/><rect x="308" y="713" width="396" height="2" fill="url(#r141)"/><rect x="308" y="715" width="398" height="2" fill="url(#r142)"/><rect x="307" y="717" width="402" height="2" fill="url(#r143)"/><rect x="307" y="719" width="404" height="2" fill="url(#r144)"/><rect x="307" y="721" width="406" height="2" fill="url(#r145)"/><rect x="306" y="723" width="410" height="2" fill="url(#r146)"/><rect x="306" y="725" width="412" height="2" fill="url(#r147)"/><rect x="305" y="727" width="412" height="2" fill="url(#r148)"/><rect x="305" y="729" width="408" height="2" fill="url(#r149)"/><rect x="304" y="731" width="405" height="2" fill="url(#r150)"/><rect x="304" y="733" width="402" height="2" fill="url(#r151)"/><rect x="303" y="735" width="399" height="2" fill="url(#r152)"/><rect x="303" y="737" width="395" height="2" fill="url(#r153)"/><rect x="302" y="739" width="393" height="2" fill="url(#r154)"/><rect x="302" y="741" width="389" height="2" fill="url(#r155)"/><rect x="301" y="743" width="387" height="2" fill="url(#r156)"/><rect x="301" y="745" width="383" height="2" fill="url(#r157)"/><rect x="301" y="747" width="379" height="2" fill="url(#r158)"/><rect x="300" y="749" width="377" height="2" fill="url(#r159)"/><rect x="300" y="751" width="373" height="2" fill="url(#r160)"/><rect x="299" y="753" width="370" height="2" fill="url(#r161)"/><rect x="299" y="755" width="367" height="2" fill="url(#r162)"/><rect x="298" y="757" width="364" height="2" fill="url(#r163)"/><rect x="298" y="759" width="361" height="2" fill="url(#r164)"/><rect x="297" y="761" width="358" height="2" fill="url(#r165)"/><rect x="297" y="763" width="354" height="2" fill="url(#r166)"/><rect x="296" y="765" width="352" height="2" fill="url(#r167)"/><rect x="296" y="767" width="348" height="2" fill="url(#r168)"/><rect x="295" y="769" width="345" height="2" fill="url(#r169)"/><rect x="295" y="771" width="342" height="2" fill="url(#r170)"/><rect x="295" y="773" width="338" height="2" fill="url(#r171)"/><rect x="294" y="775" width="336" height="2" fill="url(#r172)"/><rect x="294" y="777" width="332" height="2" fill="url(#r173)"/><rect x="293" y="779" width="329" height="2" fill="url(#r174)"/><rect x="293" y="781" width="326" height="2" fill="url(#r175)"/><rect x="292" y="783" width="323" height="2" fill="url(#r176)"/><rect x="292" y="785" width="319" height="2" fill="url(#r177)"/><rect x="291" y="787" width="317" height="2" fill="url(#r178)"/><rect x="291" y="789" width="313" height="2" fill="url(#r179)"/><rect x="290" y="791" width="311" height="2" fill="url(#r180)"/><rect x="290" y="793" width="307" height="2" fill="url(#r181)"/><rect x="289" y="795" width="304" height="2" fill="url(#r182)"/><rect x="289" y="797" width="301" height="2" fill="url(#r183)"/><rect x="289" y="799" width="297" height="2" fill="url(#r184)"/><rect x="288" y="801" width="294" height="2" fill="url(#r185)"/><rect x="288" y="803" width="291" height="2" fill="url(#r186)"/><rect x="287" y="805" width="288" height="2" fill="url(#r187)"/><rect x="287" y="807" width="285" height="2" fill="url(#r188)"/><rect x="286" y="809" width="282" height="2" fill="url(#r189)"/><rect x="286" y="811" width="278" height="2" fill="url(#r190)"/><rect x="285" y="813" width="276" height="2" fill="url(#r191)"/><rect x="285" y="815" width="272" height="2" fill="url(#r192)"/><rect x="284" y="817" width="269" height="2" fill="url(#r193)"/><rect x="284" y="819" width="266" height="2" fill="url(#r194)"/><rect x="284" y="821" width="262" height="2" fill="url(#r195)"/><rect x="283" y="823" width="259" height="2" fill="url(#r196)"/><rect x="283" y="825" width="256" height="2" fill="url(#r197)"/><rect x="282" y="827" width="253" height="2" fill="url(#r198)"/><rect x="282" y="829" width="250" height="2" fill="url(#r199)"/><rect x="281" y="831" width="247" height="2" fill="url(#r200)"/><rect x="281" y="833" width="243" height="2" fill="url(#r201)"/><rect x="280" y="835" width="241" height="2" fill="url(#r202)"/><rect x="280" y="837" width="237" height="2" fill="url(#r203)"/><rect x="279" y="839" width="234" height="2" fill="url(#r204)"/><rect x="279" y="841" width="231" height="2" fill="url(#r205)"/><rect x="278" y="843" width="228" height="2" fill="url(#r206)"/><rect x="278" y="845" width="225" height="2" fill="url(#r207)"/><rect x="278" y="847" width="221" height="2" fill="url(#r208)"/><rect x="277" y="849" width="218" height="2" fill="url(#r209)"/><rect x="277" y="851" width="215" height="2" fill="url(#r210)"/><rect x="276" y="853" width="212" height="2" fill="url(#r211)"/><rect x="276" y="855" width="208" height="2" fill="url(#r212)"/><rect x="275" y="857" width="206" height="2" fill="url(#r213)"/><rect x="275" y="859" width="202" height="2" fill="url(#r214)"/><rect x="274" y="861" width="200" height="2" fill="url(#r215)"/><rect x="274" y="863" width="196" height="2" fill="url(#r216)"/><rect x="273" y="865" width="193" height="2" fill="url(#r217)"/><rect x="273" y="867" width="190" height="2" fill="url(#r218)"/><rect x="272" y="869" width="187" height="2" fill="url(#r219)"/><rect x="272" y="871" width="183" height="2" fill="url(#r220)"/><rect x="272" y="873" width="180" height="2" fill="url(#r221)"/><rect x="271" y="875" width="177" height="2" fill="url(#r222)"/><rect x="271" y="877" width="174" height="2" fill="url(#r223)"/><rect x="270" y="879" width="171" height="2" fill="url(#r224)"/><rect x="270" y="881" width="167" height="2" fill="url(#r225)"/><rect x="269" y="883" width="165" height="2" fill="url(#r226)"/><rect x="269" y="885" width="161" height="2" fill="url(#r227)"/><rect x="268" y="887" width="158" height="2" fill="url(#r228)"/><rect x="268" y="889" width="155" height="2" fill="url(#r229)"/><rect x="267" y="891" width="152" height="2" fill="url(#r230)"/><rect x="267" y="893" width="149" height="2" fill="url(#r231)"/><rect x="266" y="895" width="146" height="2" fill="url(#r232)"/><rect x="266" y="897" width="142" height="2" fill="url(#r233)"/><rect x="266" y="899" width="139" height="2" fill="url(#r234)"/><rect x="265" y="901" width="136" height="2" fill="url(#r235)"/><rect x="265" y="903" width="132" height="2" fill="url(#r236)"/><rect x="264" y="905" width="130" height="2" fill="url(#r237)"/><rect x="264" y="907" width="126" height="2" fill="url(#r238)"/><rect x="263" y="909" width="123" height="2" fill="url(#r239)"/><rect x="263" y="911" width="120" height="2" fill="url(#r240)"/><rect x="262" y="913" width="117" height="2" fill="url(#r241)"/><rect x="262" y="915" width="114" height="2" fill="url(#r242)"/><rect x="261" y="917" width="111" height="2" fill="url(#r243)"/><rect x="261" y="919" width="107" height="2" fill="url(#r244)"/><rect x="261" y="921" width="104" height="2" fill="url(#r245)"/><rect x="260" y="923" width="101" height="2" fill="url(#r246)"/><rect x="260" y="925" width="97" height="2" fill="url(#r247)"/><rect x="259" y="927" width="95" height="2" fill="url(#r248)"/><rect x="259" y="929" width="91" height="2" fill="url(#r249)"/><rect x="258" y="931" width="89" height="2" fill="url(#r250)"/><rect x="258" y="933" width="85" height="2" fill="url(#r251)"/><rect x="257" y="935" width="82" height="2" fill="url(#r252)"/><rect x="257" y="937" width="79" height="2" fill="url(#r253)"/><rect x="256" y="939" width="76" height="2" fill="url(#r254)"/><rect x="256" y="941" width="72" height="2" fill="url(#r255)"/><rect x="255" y="943" width="70" height="2" fill="url(#r256)"/><rect x="255" y="945" width="66" height="2" fill="url(#r257)"/><rect x="255" y="947" width="63" height="2" fill="url(#r258)"/><rect x="254" y="949" width="60" height="2" fill="url(#r259)"/><rect x="254" y="951" width="56" height="2" fill="url(#r260)"/><rect x="253" y="953" width="54" height="2" fill="url(#r261)"/><rect x="253" y="955" width="50" height="2" fill="url(#r262)"/><rect x="252" y="957" width="47" height="2" fill="url(#r263)"/><rect x="252" y="959" width="44" height="2" fill="url(#r264)"/><rect x="251" y="961" width="41" height="2" fill="url(#r265)"/><rect x="251" y="963" width="38" height="2" fill="url(#r266)"/><rect x="250" y="965" width="35" height="2" fill="url(#r267)"/><rect x="250" y="967" width="31" height="2" fill="url(#r268)"/><rect x="249" y="969" width="29" height="2" fill="url(#r269)"/><rect x="249" y="971" width="25" height="2" fill="url(#r270)"/><rect x="249" y="973" width="21" height="2" fill="url(#r271)"/><rect x="248" y="975" width="19" height="2" fill="url(#r272)"/><rect x="248" y="977" width="15" height="2" fill="url(#r273)"/><rect x="247" y="979" width="13" height="2" fill="url(#r274)"/><rect x="247" y="981" width="9" height="2" fill="url(#r275)"/><rect x="246" y="983" width="6" height="2" fill="url(#r276)"/></g>
<g fill="#fff" fill-opacity="0.10" clip-path="url(#tc)"><rect x="193" y="190" width="2" height="850"/><rect x="289" y="190" width="2" height="850"/><rect x="385" y="190" width="2" height="850"/><rect x="479" y="190" width="2" height="850"/><rect x="575" y="190" width="2" height="850"/><rect x="671" y="190" width="2" height="850"/><rect x="765" y="190" width="2" height="850"/><rect x="861" y="190" width="2" height="850"/><rect x="101" y="946" width="857" height="2"/><rect x="101" y="852" width="857" height="2"/><rect x="101" y="756" width="857" height="2"/><rect x="101" y="662" width="857" height="2"/><rect x="101" y="568" width="857" height="2"/><rect x="101" y="472" width="857" height="2"/><rect x="101" y="378" width="857" height="2"/><rect x="101" y="284" width="857" height="2"/></g>
<path d="M266.0 1036.3C265.8 1036.3 265.6 1036.5 265.2 1036.5C264.8 1036.4 264.1 1036.5 263.4 1036.2C262.7 1035.8 262.1 1035.4 261.0 1034.5C259.9 1033.6 258.0 1031.8 256.7 1030.7C255.5 1029.6 254.8 1029.0 253.6 1027.9C252.3 1026.9 250.9 1025.6 249.3 1024.2C247.7 1022.8 246.0 1021.4 243.9 1019.5C241.9 1017.6 239.7 1015.6 237.3 1012.9C234.8 1010.2 232.3 1007.7 229.2 1003.2C226.0 998.8 222.4 993.7 218.3 986.3C214.2 978.9 209.7 970.6 204.5 958.8C199.3 947.0 193.5 933.3 187.0 915.4C180.5 897.4 172.8 876.6 165.5 851.0C158.2 825.4 150.5 795.2 143.3 761.7C136.1 728.3 128.3 688.7 122.4 650.3C116.5 611.9 110.9 569.5 107.8 531.3C104.7 493.1 102.8 454.5 103.7 421.1C104.6 387.7 107.7 355.6 113.3 330.8C118.8 306.0 127.5 285.5 137.1 272.3C146.7 259.1 158.9 253.9 170.8 251.6C182.8 249.4 196.1 254.4 208.9 258.8C221.6 263.2 235.0 271.0 247.5 278.1C260.0 285.1 272.0 292.9 283.9 301.1C295.8 309.2 307.3 317.9 318.9 326.9C330.5 335.9 341.9 345.5 353.4 355.3C364.8 365.1 376.2 375.3 387.5 385.6C398.9 395.9 410.2 406.5 421.5 417.2C432.9 427.9 444.3 438.9 455.7 449.8C467.0 460.7 478.3 471.8 489.6 482.8C500.9 493.8 512.2 504.9 523.4 515.9C534.5 526.8 545.6 537.8 556.4 548.5C567.3 559.3 578.1 570.0 588.6 580.3C599.1 590.7 609.4 601.0 619.4 610.8C629.3 620.7 639.1 630.3 648.3 639.4C657.6 648.5 666.5 657.5 674.7 665.6C683.0 673.8 690.5 681.2 697.7 688.4C704.9 695.5 711.8 702.3 717.9 708.3C724.1 714.4 729.6 719.8 734.7 724.8C739.8 729.8 744.3 734.3 748.3 738.3C752.4 742.4 754.8 744.8 759.2 749.1C763.6 753.5 770.5 760.2 774.8 764.6C779.2 768.9 781.9 771.6 785.4 775.1C788.9 778.5 793.4 782.9 795.9 785.4C798.4 787.9 799.6 789.1 800.4 789.8Z" fill="none" stroke="#fff" stroke-width="2.2" stroke-linejoin="round"/>
<g fill="none" stroke-width="2" stroke-linecap="round">
<path d="M710.1 728.6L243.0 984.2" stroke="url(#srb)"/>
<path d="M386.0 473.0L710.1 728.6" stroke="url(#sgr)"/>
<path d="M243.0 984.2L386.0 473.0" stroke="url(#sbg)"/>
</g>
<path d="M374.8 431.8L717.3 726.8L247.3 985.9Z" fill="none" stroke="#fff" stroke-width="1.9" stroke-linejoin="round"/>
<g stroke-width="2.2" stroke-linecap="round">
<path d="M391.2 722.2L404.8 735.6M404.8 722.2L391.2 735.6" stroke="#b4fff6"/>
<path d="M389.5 724.3L402.9 737.8M402.9 724.3L389.5 737.8" stroke="#fff"/>
</g>
<g fill="#000"><rect x="99" y="1043" width="2" height="9"/><rect x="89" y="1040" width="10" height="2"/><rect x="193" y="1043" width="2" height="9"/><rect x="89" y="946" width="10" height="2"/><rect x="289" y="1043" width="2" height="9"/><rect x="89" y="852" width="10" height="2"/><rect x="385" y="1043" width="2" height="9"/><rect x="89" y="756" width="10" height="2"/><rect x="479" y="1043" width="2" height="9"/><rect x="89" y="662" width="10" height="2"/><rect x="575" y="1043" width="2" height="9"/><rect x="89" y="568" width="10" height="2"/><rect x="671" y="1043" width="2" height="9"/><rect x="89" y="472" width="10" height="2"/><rect x="765" y="1043" width="2" height="9"/><rect x="89" y="378" width="10" height="2"/><rect x="861" y="1043" width="2" height="9"/><rect x="89" y="284" width="10" height="2"/><rect x="957" y="1043" width="2" height="9"/><rect x="89" y="188" width="10" height="2"/></g>
<g font-family="Liberation Sans, sans-serif" font-size="17.5" fill="#000"><text x="100.0" y="1071" text-anchor="middle">0,00</text><text x="84" y="1048.5" text-anchor="end">0,00</text><text x="194.0" y="1071" text-anchor="middle">0,10</text><text x="84" y="954.5" text-anchor="end">0,10</text><text x="290.0" y="1071" text-anchor="middle">0,20</text><text x="84" y="860.5" text-anchor="end">0,20</text><text x="386.0" y="1071" text-anchor="middle">0,30</text><text x="84" y="764.5" text-anchor="end">0,30</text><text x="480.0" y="1071" text-anchor="middle">0,40</text><text x="84" y="670.5" text-anchor="end">0,40</text><text x="576.0" y="1071" text-anchor="middle">0,50</text><text x="84" y="576.5" text-anchor="end">0,50</text><text x="672.0" y="1071" text-anchor="middle">0,60</text><text x="84" y="480.5" text-anchor="end">0,60</text><text x="766.0" y="1071" text-anchor="middle">0,70</text><text x="84" y="386.5" text-anchor="end">0,70</text><text x="862.0" y="1071" text-anchor="middle">0,80</text><text x="84" y="292.5" text-anchor="end">0,80</text><text x="958.0" y="1071" text-anchor="middle">0,90</text><text x="84" y="196.5" text-anchor="end">0,90</text>
<text x="513" y="155" text-anchor="middle">CIE 1931 xy</text></g>
</svg>

<!-- zoom buttons -->
<div class="abs zb" style="left:875px;top:144px"></div>
<div class="abs zb" style="left:931px;top:144px"></div>
<svg class="abs" style="left:875px;top:144px" width="100" height="42" viewBox="875 144 100 42">
<defs>
<radialGradient id="lens" cx="0.5" cy="0.75" r="0.75"><stop offset="0" stop-color="#efefef"/><stop offset="1" stop-color="#cfcfcf"/></radialGradient>
<linearGradient id="hdl" x1="0" y1="1" x2="1" y2="0"><stop offset="0" stop-color="#b4b4b4"/><stop offset="0.5" stop-color="#d4d4d4"/><stop offset="1" stop-color="#bcbcbc"/></linearGradient>
</defs>
<g>
<ellipse cx="906" cy="180.3" rx="6" ry="0.8" fill="#bdbdbd" opacity="0.7"/>
<path d="M899.5 168L903 171.6" stroke="#b8b8b8" stroke-width="2.6" fill="none"/>
<path d="M903.2 171.4L909.2 177.6" stroke="#adadad" stroke-width="5.4" stroke-linecap="round" fill="none"/>
<path d="M903.3 171.5L909.1 177.5" stroke="url(#hdl)" stroke-width="3.8" stroke-linecap="round" fill="none"/>
<circle cx="893.3" cy="161.8" r="10.5" fill="#bdbdbd"/>
<circle cx="893.3" cy="161.8" r="9.8" fill="#e9e9e9"/>
<circle cx="893.3" cy="161.8" r="8.0" fill="#c0c0c0"/>
<circle cx="893.3" cy="161.8" r="7.3" fill="url(#lens)"/>
</g>
<path d="M888.4 161.9H898.2M893.3 157V166.8" stroke="#acacac" stroke-width="2.3" fill="none"/>
<g transform="translate(56 0)">
<ellipse cx="906" cy="180.3" rx="6" ry="0.8" fill="#bdbdbd" opacity="0.7"/>
<path d="M899.5 168L903 171.6" stroke="#b8b8b8" stroke-width="2.6" fill="none"/>
<path d="M903.2 171.4L909.2 177.6" stroke="#adadad" stroke-width="5.4" stroke-linecap="round" fill="none"/>
<path d="M903.3 171.5L909.1 177.5" stroke="url(#hdl)" stroke-width="3.8" stroke-linecap="round" fill="none"/>
<circle cx="893.3" cy="161.8" r="10.5" fill="#bdbdbd"/>
<circle cx="893.3" cy="161.8" r="9.8" fill="#e9e9e9"/>
<circle cx="893.3" cy="161.8" r="8.0" fill="#c0c0c0"/>
<circle cx="893.3" cy="161.8" r="7.3" fill="url(#lens)"/>
</g>
<path d="M944.4 161.9H954.2" stroke="#acacac" stroke-width="2.3" fill="none"/>
</svg>


<!-- group 1 -->
<div class="abs gb" style="left:994px;top:149px;width:366px;height:473px"></div>
<div class="abs gl" style="left:1010px;top:139px">Farbraum anzeigen</div>
<div class="abs cb" style="left:1014px;top:191px"><svg width="18" height="18" viewBox="0 0 18 18" style="display:block"><path d="M2.5 9.2L6.8 13.3L15.6 4.8" fill="none" stroke="#333" stroke-width="1.4"/></svg></div>
<div class="abs lb" style="left:1044px;top:190px;letter-spacing:0.00px">Bildschirm</div>
<div class="abs cb" style="left:1014px;top:239px"></div>
<div class="abs lb" style="left:1044px;top:238px;letter-spacing:-0.40px">Ziel</div>
<div class="abs cb" style="left:1014px;top:287px"></div>
<div class="abs lb" style="left:1044px;top:286px;letter-spacing:-0.60px">Adobe RGB</div>
<div class="abs cb" style="left:1014px;top:335px"><svg width="18" height="18" viewBox="0 0 18 18" style="display:block"><path d="M2.5 9.2L6.8 13.3L15.6 4.8" fill="none" stroke="#333" stroke-width="1.4"/></svg></div>
<div class="abs lb" style="left:1044px;top:334px;letter-spacing:-1.50px">sRGB</div>
<div class="abs cb" style="left:1014px;top:383px"></div>
<div class="abs lb" style="left:1044px;top:382px;letter-spacing:-0.18px">NTSC (1953)</div>
<div class="abs cb" style="left:1014px;top:431px"></div>
<div class="abs lb" style="left:1044px;top:430px;letter-spacing:-1.20px">SMPTE-C</div>
<div class="abs cb" style="left:1014px;top:479px"></div>
<div class="abs lb" style="left:1044px;top:478px;letter-spacing:-0.75px">HDTV</div>
<div class="abs cb" style="left:1014px;top:527px"></div>
<div class="abs lb" style="left:1044px;top:526px;letter-spacing:0.20px">Digital Cinema (DCI)</div>
<div class="abs cb" style="left:1014px;top:575px"></div>
<div class="abs lb" style="left:1044px;top:574px;letter-spacing:0.20px">BT.2020</div>


<!-- group 2 -->
<div class="abs gb" style="left:994px;top:647px;width:366px;height:137px"></div>
<div class="abs gl" style="left:1010px;top:637px">Farbraum</div>
<div class="abs rb" style="left:1014px;top:689px"><div class="abs" style="left:4px;top:4px;width:10px;height:10px;border-radius:50%;background:#333"></div></div>
<div class="abs lb" style="left:1046px;top:688px">CIE xy</div>
<div class="abs rb" style="left:1014px;top:737px"></div>
<div class="abs lb" style="left:1046px;top:736px">CIE u'v'</div>

<div class="abs cb" style="left:994px;top:805px"></div>
<div class="abs lb" style="left:1024px;top:804px">Planck’schen Kurvenzug anzeigen</div>
<div class="abs cb" style="left:994px;top:853px"></div>
<div class="abs lb" style="left:1024px;top:852px;letter-spacing:0.12px">Ziel-Weißpunkt anzeigen</div>

<!-- size grip -->
<svg class="abs" style="left:1392px;top:1183px" width="14" height="14" viewBox="0 0 14 14" shape-rendering="crispEdges"><g fill="#b9b9b9"><rect x="9" y="1" width="3" height="3"/><rect x="5" y="5" width="3" height="3"/><rect x="9" y="5" width="3" height="3"/><rect x="1" y="9" width="3" height="3"/><rect x="5" y="9" width="3" height="3"/><rect x="9" y="9" width="3" height="3"/></g></svg>
</body>
</html>
